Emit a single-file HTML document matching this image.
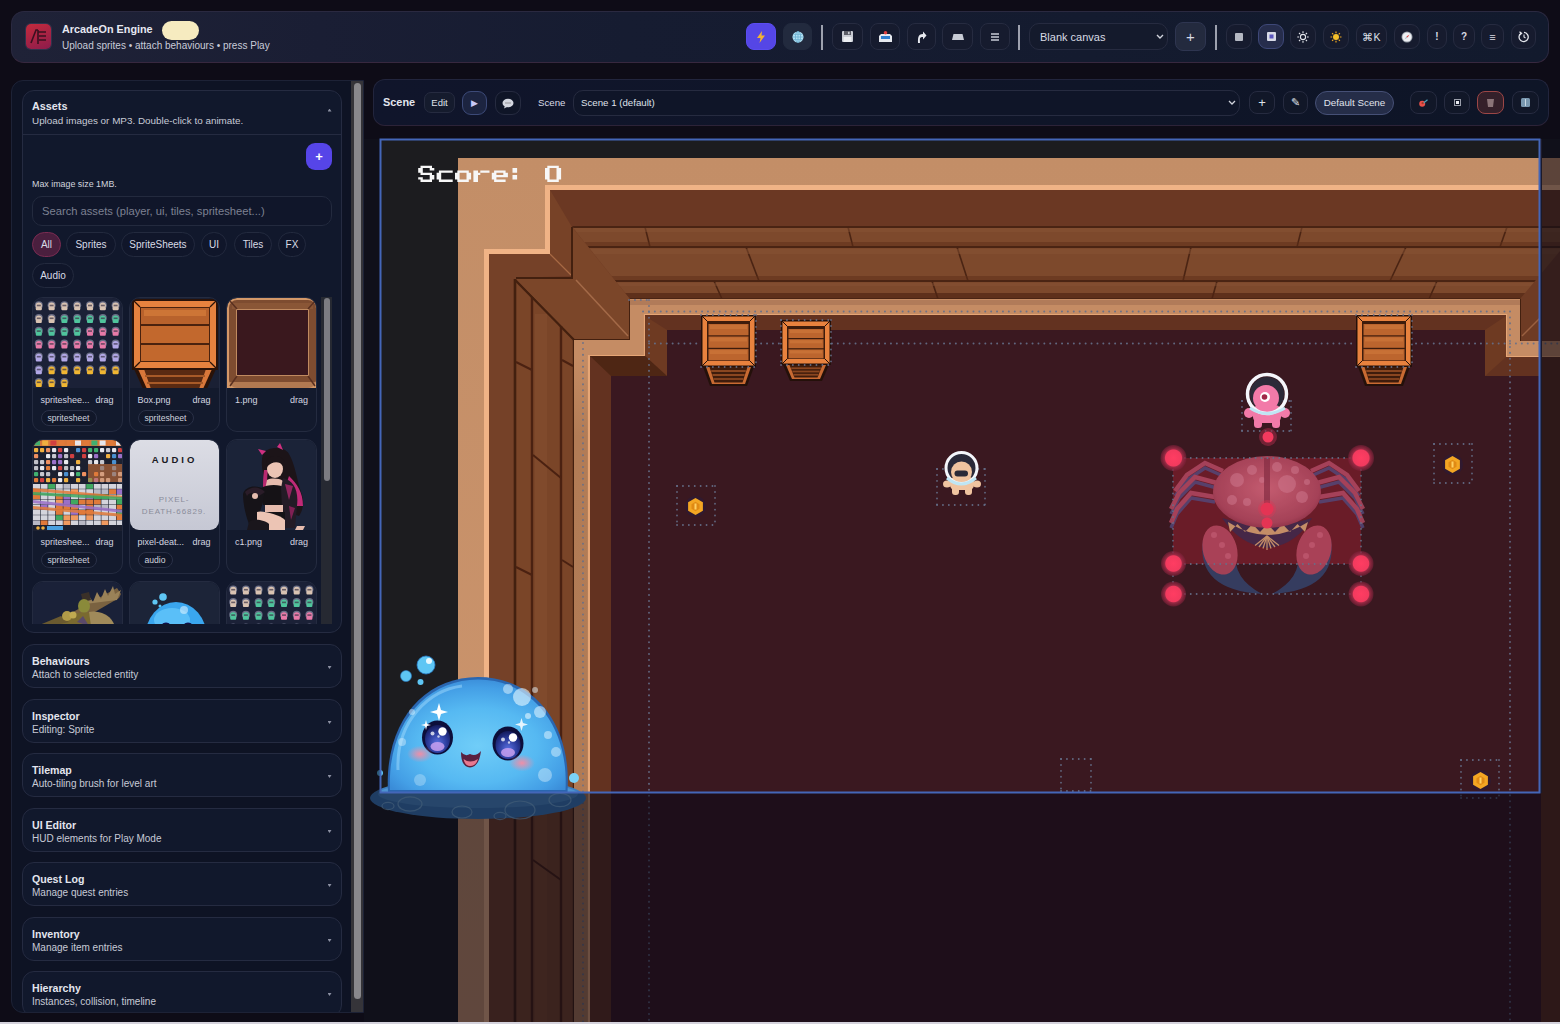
<!DOCTYPE html>
<html><head><meta charset="utf-8">
<style>
*{box-sizing:border-box;margin:0;padding:0}
html,body{width:1560px;height:1024px;overflow:hidden;background:#0e0c17;font-family:"Liberation Sans",sans-serif;color:#d8dbe6}
.abs{position:absolute}
#topbar{position:absolute;left:11px;top:11px;width:1538px;height:52px;border-radius:13px;background:linear-gradient(90deg,#1f2237 0%,#1a1e34 20%,#161c31 40%,#121a2d 100%);border:1px solid #2a2940;border-bottom-color:#37283f}
.logo{position:absolute;left:14px;top:12px;width:25px;height:25px;border-radius:5px;background:linear-gradient(160deg,#c42a3c,#8c1c4c);box-shadow:0 0 0 1px #30334c}
.title{position:absolute;left:50px;top:11px;font-size:10.8px;font-weight:700;color:#e6e8f2}
.badge{position:absolute;left:150px;top:10px;width:37px;height:19px;border-radius:10px;background:#f6ebc0}
.sub{position:absolute;left:50px;top:28px;font-size:10px;color:#c9ccd9}
.tb{position:absolute;top:11px;height:27px;border-radius:8px;border:1px solid #262b40;background:#161b2e;font-size:11px;color:#d8dae4;display:flex;align-items:center;justify-content:center}
.sep{position:absolute;top:13px;width:2px;height:25px;background:#8a8e9c}
#leftpanel{position:absolute;left:11px;top:80px;width:353px;height:933px;border-radius:12px 0 0 12px;background:#0e1324;border:1px solid #1d2236;overflow:hidden}
.card{position:absolute;left:10px;width:320px;border-radius:12px;border:1px solid #252b41;background:#11182c}
.ctitle{position:absolute;left:9px;font-size:10.6px;font-weight:700;color:#e3e5ee;white-space:nowrap}
.csub{position:absolute;left:9px;font-size:10px;color:#c7cad6;white-space:nowrap}
.cdot{position:absolute;left:304.5px;width:4px;height:3px;background:#8c90a2;clip-path:polygon(0 0,100% 0,50% 100%)}
.cup{clip-path:polygon(50% 0,100% 100%,0 100%)}
.chip{position:absolute;height:25px;border-radius:13px;border:1px solid #232a3e;background:#10162a;font-size:10px;color:#d8dbe6;display:flex;align-items:center;justify-content:center}
.asset{position:absolute;width:91px;border-radius:10px;border:1px solid #232a3e;background:#141a2e;overflow:hidden}
.aimg{position:absolute;left:0;top:0;width:91px;height:90px;background:#1a2034}
.alab{position:absolute;left:8px;top:97px;font-size:9px;color:#d6d9e4;white-space:nowrap}
.adrag{position:absolute;right:8px;top:97px;font-size:9px;color:#d6d9e4}
.atag{position:absolute;left:8px;top:112px;height:16px;padding:0 7px;border-radius:8px;border:1px solid #2a3046;font-size:8.5px;color:#d0d3de;line-height:14px;background:#121829}
#scenebar{position:absolute;left:373px;top:79px;width:1176px;height:47px;border-radius:12px;background:linear-gradient(90deg,#10152b,#0f1528 60%,#0e1527);border:1px solid #22253d;border-bottom-color:#2c2338}
.sb{position:absolute;top:11px;height:23px;border-radius:8px;border:1px solid #262b40;background:#111728;font-size:10px;color:#dfe1ea;display:flex;align-items:center;justify-content:center}
</style></head><body>

<div id="topbar">
  <div class="logo"><svg width="25" height="25" viewBox="0 0 25 25"><path d="M5 19 L10 6 L12 6 M12 8 L20 8 M13 12 L20 12 M13 16 L20 16 M12 6 L12 20" stroke="#3a1020" stroke-width="1.6" fill="none"/></svg></div>
  <div class="title">ArcadeOn Engine</div>
  <div class="badge" style="top:9px"></div>
  <div class="sub">Upload sprites • attach behaviours • press Play</div>

  <div class="tb" style="left:734px;width:30px;background:#5546e6;border-color:#5a4cf0"><svg width="10" height="12" viewBox="0 0 10 12"><path d="M6 0 L1 7 L4.5 7 L3.5 12 L9 4.5 L5.5 4.5 Z" fill="#f2b233"/></svg></div>
  <div class="tb" style="left:771px;width:29px;background:#222a3e;border-color:#222a3e"><svg width="12" height="12" viewBox="0 0 12 12"><circle cx="6" cy="6" r="5.5" fill="#b4e2f4"/><path d="M0.5 6 H11.5 M6 0.5 V11.5 M1.5 3.3 H10.5 M1.5 8.7 H10.5" stroke="#6aaed0" stroke-width="0.8"/><ellipse cx="6" cy="6" rx="2.6" ry="5.5" fill="none" stroke="#6aaed0" stroke-width="0.8"/></svg></div>
  <div class="sep" style="left:809px;width:1.6px;background:#9da1ae"></div>
  <div class="tb" style="left:820px;width:31px"><svg width="11" height="11" viewBox="0 0 11 11"><rect x="0" y="0" width="11" height="11" rx="1" fill="#c9ccd4"/><rect x="2" y="0" width="7" height="4" fill="#5a5c66"/><rect x="6" y="0.8" width="1.6" height="2.4" fill="#c9ccd4"/><rect x="1.5" y="6" width="8" height="5" fill="#eceef2"/></svg></div>
  <div class="tb" style="left:858px;width:30px"><svg width="13" height="11" viewBox="0 0 13 11"><path d="M0 5 L2 3 L11 3 L13 5 L13 11 L0 11 Z" fill="#e6e9ef"/><rect x="2" y="5" width="9" height="3" fill="#2f7fd0"/><circle cx="6.5" cy="1.8" r="1.8" fill="#e04040"/></svg></div>
  <div class="tb" style="left:895px;width:29px"><svg width="10" height="12" viewBox="0 0 10 12"><path d="M3 12 C3 8 2 6 6 6 L6 8.5 L9.5 4.5 L6 0.5 L6 3 C0.5 3 1 8 1 12 Z" fill="#e8eaf0" transform="translate(0,0)"/></svg></div>
  <div class="tb" style="left:930px;width:31px"><svg width="12" height="6" viewBox="0 0 12 6"><path d="M1.5 0 H10.5 L12 6 H0 Z" fill="#c8ccd6"/></svg></div>
  <div class="tb" style="left:968px;width:30px"><svg width="8" height="8" viewBox="0 0 8 8"><path d="M0 1 H8 M0 4 H8 M0 7 H8" stroke="#c8ccd6" stroke-width="1.3"/></svg></div>
  <div class="sep" style="left:1006px;width:1.6px;background:#9da1ae"></div>
  <div class="tb" style="left:1017px;width:139px;border-radius:10px;justify-content:flex-start;padding-left:10px;background:#141a2c">Blank canvas<svg style="position:absolute;right:3px;top:10px" width="8" height="6" viewBox="0 0 8 6"><path d="M1 1 L4 4 L7 1" stroke="#d0d3dc" stroke-width="1.4" fill="none"/></svg></div>
  <div class="tb" style="left:1163px;width:31px;top:10px;height:29px;background:#232a3e;border-color:#2e3550;font-size:15px">+</div>
  <div class="sep" style="left:1203px;width:1.6px;background:#9da1ae"></div>
  <div class="tb" style="left:1214px;width:26px;top:12px;height:25px;border-radius:9px"><div style="width:8px;height:8px;background:#b4b8c2;border-radius:1px"></div></div>
  <div class="tb" style="left:1246px;width:26px;top:12px;height:25px;border-radius:9px;background:#262d4c;border-color:#3e4878"><svg width="9" height="9" viewBox="0 0 9 9"><rect width="9" height="9" rx="1" fill="#d8dbe8"/><rect x="2.5" y="2.5" width="4" height="4" fill="#5a56c0"/></svg></div>
  <div class="tb" style="left:1278px;width:26px;top:12px;height:25px;border-radius:9px"><svg width="12" height="12" viewBox="0 0 12 12"><circle cx="6" cy="6" r="2.6" fill="none" stroke="#e4e6ec" stroke-width="1.1"/><path d="M6 0.3V2 M6 10V11.7 M0.3 6H2 M10 6H11.7 M2 2L3.2 3.2 M8.8 8.8L10 10 M2 10L3.2 8.8 M8.8 3.2L10 2" stroke="#e4e6ec" stroke-width="1.1"/></svg></div>
  <div class="tb" style="left:1311px;width:26px;top:12px;height:25px;border-radius:9px"><svg width="12" height="12" viewBox="0 0 12 12"><circle cx="6" cy="6" r="3" fill="#f5c02a"/><path d="M6 0.5V2.2 M6 9.8V11.5 M0.5 6H2.2 M9.8 6H11.5 M2.1 2.1L3.3 3.3 M8.7 8.7L9.9 9.9 M2.1 9.9L3.3 8.7 M8.7 3.3L9.9 2.1" stroke="#f0a820" stroke-width="1.2"/></svg></div>
  <div class="tb" style="left:1344px;width:31px;top:12px;height:25px;border-radius:9px;font-size:10.5px;color:#dfe1e8">⌘K</div>
  <div class="tb" style="left:1382px;width:26px;top:12px;height:25px;border-radius:9px"><svg width="12" height="12" viewBox="0 0 12 12"><circle cx="6" cy="6" r="5.5" fill="#9aa0aa"/><circle cx="6" cy="6" r="4.6" fill="#eef0f4"/><path d="M8.5 3.5 L6.6 6.6 L5.4 5.4 Z" fill="#e04848"/><path d="M3.5 8.5 L5.4 5.4 L6.6 6.6 Z" fill="#b0b4be"/></svg></div>
  <div class="tb" style="left:1415px;width:20px;top:12px;height:25px;border-radius:9px;font-size:10px;font-weight:700">!</div>
  <div class="tb" style="left:1441px;width:22px;top:12px;height:25px;border-radius:9px;font-size:10px;font-weight:700">?</div>
  <div class="tb" style="left:1469px;width:23px;top:12px;height:25px;border-radius:9px;font-size:11px">≡</div>
  <div class="tb" style="left:1499px;width:25px;top:12px;height:25px;border-radius:9px"><svg width="12" height="12" viewBox="0 0 12 12"><path d="M3 2.2 A4.6 4.6 0 1 0 6 1.4" fill="none" stroke="#e4e6ec" stroke-width="1.3"/><path d="M1.5 0.8 L3.6 2.4 L1.8 4" fill="none" stroke="#e4e6ec" stroke-width="1.2"/><path d="M6 3.5 V6 L7.5 7" fill="none" stroke="#e4e6ec" stroke-width="1.1"/></svg></div>
</div>

<div id="leftpanel">
  <div class="card" style="top:9px;height:543px">
    <div class="ctitle" style="top:9px;font-size:10.8px">Assets</div>
    <div class="csub" style="top:23.5px;font-size:9.9px">Upload images or MP3. Double-click to animate.</div>
    <div class="cdot cup" style="top:17.5px"></div>
    <div style="position:absolute;left:0;top:43px;width:319px;height:1px;background:#252b41"></div>
    <div style="position:absolute;left:283px;top:52px;width:26px;height:27px;border-radius:9px;background:#5645e8;color:#fff;font-size:13px;font-weight:700;display:flex;align-items:center;justify-content:center">+</div>
    <div class="csub" style="top:87.5px;font-size:8.9px;color:#d0d3de">Max image size 1MB.</div>
    <div style="position:absolute;left:9px;top:105px;width:300px;height:30px;border-radius:10px;border:1px solid #232a3e;background:#10162a;font-size:11.2px;color:#7d8192;padding-left:9px;line-height:28px;white-space:nowrap">Search assets (player, ui, tiles, spritesheet...)</div>
    <div class="chip" style="left:9px;top:141px;width:29px;background:#4a1f3e;border-color:#7a2c52">All</div>
    <div class="chip" style="left:43px;top:141px;width:50px">Sprites</div>
    <div class="chip" style="left:98px;top:141px;width:74px">SpriteSheets</div>
    <div class="chip" style="left:178px;top:141px;width:26px">UI</div>
    <div class="chip" style="left:211px;top:141px;width:38px">Tiles</div>
    <div class="chip" style="left:255px;top:141px;width:28px">FX</div>
    <div class="chip" style="left:9px;top:172px;width:42px">Audio</div>
    <div id="grid" style="position:absolute;left:0;top:196px;width:319px;height:337px;overflow:hidden">
    </div>
  </div>
  <div class="card" style="top:563px;height:44px"><div class="ctitle" style="top:10px">Behaviours</div><div class="csub" style="top:24px">Attach to selected entity</div><div class="cdot" style="top:21px"></div></div>
  <div class="card" style="top:618px;height:44px"><div class="ctitle" style="top:10px">Inspector</div><div class="csub" style="top:24px">Editing: Sprite</div><div class="cdot" style="top:21px"></div></div>
  <div class="card" style="top:672px;height:44px"><div class="ctitle" style="top:10px">Tilemap</div><div class="csub" style="top:24px">Auto-tiling brush for level art</div><div class="cdot" style="top:21px"></div></div>
  <div class="card" style="top:727px;height:44px"><div class="ctitle" style="top:10px">UI Editor</div><div class="csub" style="top:24px">HUD elements for Play Mode</div><div class="cdot" style="top:21px"></div></div>
  <div class="card" style="top:781px;height:44px"><div class="ctitle" style="top:10px">Quest Log</div><div class="csub" style="top:24px">Manage quest entries</div><div class="cdot" style="top:21px"></div></div>
  <div class="card" style="top:836px;height:44px"><div class="ctitle" style="top:10px">Inventory</div><div class="csub" style="top:24px">Manage item entries</div><div class="cdot" style="top:21px"></div></div>
  <div class="card" style="top:890px;height:46px"><div class="ctitle" style="top:10px">Hierarchy</div><div class="csub" style="top:24px">Instances, collision, timeline</div><div class="cdot" style="top:21px"></div></div>
  <div style="position:absolute;left:339px;top:0;width:13px;height:933px;background:#353439"></div>
  <div style="position:absolute;left:342px;top:2px;width:7px;height:916px;border-radius:4px;background:#89888c"></div>
</div>

<div id="scenebar">
  <div style="position:absolute;left:9px;top:16px;font-size:10.9px;font-weight:700;color:#e3e5ee">Scene</div>
  <div class="sb" style="left:50px;top:12px;width:31px;height:21px;border-radius:7px;font-size:9.5px;background:#151b2d">Edit</div>
  <div class="sb" style="left:88px;width:25px;height:24px;border-radius:9px;background:#1c2440;border-color:#3c4a78;font-size:8.5px;color:#c8c9f8">▶</div>
  <div class="sb" style="left:121px;width:26px;height:24px;border-radius:9px;background:#0f1527"><svg width="12" height="11" viewBox="0 0 12 11"><ellipse cx="6" cy="5" rx="5.5" ry="4.3" fill="#d4d7e0"/><path d="M3 7.5 L2 10.5 L6 8.5 Z" fill="#d4d7e0"/><circle cx="4" cy="5" r="0.8" fill="#888"/><circle cx="6" cy="5" r="0.8" fill="#888"/><circle cx="8" cy="5" r="0.8" fill="#888"/></svg></div>
  <div style="position:absolute;left:164px;top:17px;font-size:9.7px;color:#d8dbe6">Scene</div>
  <div class="sb" style="left:199px;top:10px;width:667px;height:26px;border-radius:10px;justify-content:flex-start;padding-left:7px;padding-bottom:1px;font-size:9.7px;background:#0f1528">Scene 1 (default)<svg style="position:absolute;right:3px;top:9px" width="8" height="6" viewBox="0 0 8 6"><path d="M1 1 L4 4 L7 1" stroke="#d0d3dc" stroke-width="1.3" fill="none"/></svg></div>
  <div class="sb" style="left:875px;width:26px;font-size:13px">+</div>
  <div class="sb" style="left:909px;width:25px;font-size:11px">✎</div>
  <div class="sb" style="left:941px;top:11px;width:79px;height:24px;border-radius:12px;background:#252d48;border-color:#465076;font-size:9.8px;color:#e0e3ec;padding-bottom:2px">Default Scene</div>
  <div class="sb" style="left:1036px;width:27px"><svg width="10" height="8" viewBox="0 0 10 8"><circle cx="3.2" cy="4.8" r="3" fill="#e8504a"/><path d="M4.5 4 L8.5 0.8" stroke="#4aa0b8" stroke-width="1.3"/><circle cx="3.6" cy="4.2" r="1.1" fill="#a83828"/></svg></div>
  <div class="sb" style="left:1070px;width:26px"><svg width="7" height="7" viewBox="0 0 7 7"><rect x="0.5" y="0.5" width="6" height="6" fill="none" stroke="#9a9eaa" stroke-width="1"/><rect x="2" y="2" width="3" height="3" fill="#e8eaf0"/></svg></div>
  <div class="sb" style="left:1103px;width:27px;background:#34202a;border-color:#9c4646"><svg width="7" height="8" viewBox="0 0 7 8"><path d="M0 0 H7 L6 8 H1 Z" fill="#8a7478"/></svg></div>
  <div class="sb" style="left:1138px;width:27px"><svg width="9" height="9" viewBox="0 0 9 9"><rect width="9" height="9" rx="1.5" fill="#7a98b0"/><rect x="4" y="1" width="1" height="7" fill="#c8d8e4"/></svg></div>
</div>

<div id="world" style="position:absolute;left:0;top:0;width:1560px;height:1024px;overflow:hidden;pointer-events:none"><svg style="position:absolute;left:0;top:0" width="1560" height="1024" viewBox="0 0 1560 1024">
<defs><linearGradient id="tanG" x1="0" y1="0" x2="0" y2="1"><stop offset="0" stop-color="#c38e67"/><stop offset="1" stop-color="#cd956d"/></linearGradient><radialGradient id="slimeG" cx="0.5" cy="0.6" r="0.62"><stop offset="0" stop-color="#70cdf8"/><stop offset="0.55" stop-color="#56b9f2"/><stop offset="0.85" stop-color="#449fe6"/><stop offset="1" stop-color="#3a8cd8"/></radialGradient><radialGradient id="eyeG" cx="0.5" cy="0.65" r="0.65"><stop offset="0" stop-color="#5a70e0"/><stop offset="0.6" stop-color="#2a3a9a"/><stop offset="1" stop-color="#141a5a"/></radialGradient><radialGradient id="cheekG"><stop offset="0" stop-color="#ff8aa0" stop-opacity="0.9"/><stop offset="1" stop-color="#ff8aa0" stop-opacity="0"/></radialGradient><radialGradient id="domeG" cx="0.5" cy="0.45" r="0.6"><stop offset="0" stop-color="#d86a80"/><stop offset="0.8" stop-color="#b24a62"/><stop offset="1" stop-color="#8a3048"/></radialGradient><radialGradient id="handleG"><stop offset="0" stop-color="#ff3d62"/><stop offset="0.62" stop-color="#f23a5e"/><stop offset="0.7" stop-color="#9a2a44"/><stop offset="1" stop-color="#7a2038" stop-opacity="0.6"/></radialGradient><linearGradient id="ledgeG" x1="0" y1="0" x2="0" y2="1"><stop offset="0" stop-color="#c58c64"/><stop offset="0.12" stop-color="#b27c56"/><stop offset="1" stop-color="#b07a54"/></linearGradient></defs>
<g>
<rect x="364" y="139" width="1196" height="885" fill="#1c1c1f"/>
<rect x="458" y="158" width="1102" height="866" fill="url(#tanG)"/>
<polygon points="545,185 1560,185 1560,1024 484,1024 484,249 545,249" fill="#f0b386"/>
<polygon points="550,190 1560,190 1560,1024 489,1024 489,254 550,254" fill="#6b3823"/>
<polygon points="550,190 572,227 572,276 550,254" fill="#774227"/>
<polygon points="550,254 572,276 515,278 489,278 489,254" fill="#754128"/>
<line x1="550" y1="254" x2="571" y2="275" stroke="#a86a44" stroke-width="1.2"/>
<polygon points="572,227 1590,227 1530,299 630,299" fill="#7d492c"/>
<clipPath id="plk"><polygon points="572,226 1590,226 1530,300 630,300"/></clipPath>
<g clip-path="url(#plk)">
<line x1="560" y1="227" x2="1560" y2="227" stroke="#4a2413" stroke-width="2"/>
<line x1="560" y1="247" x2="1560" y2="247" stroke="#4a2413" stroke-width="2"/>
<line x1="560" y1="281" x2="1560" y2="281" stroke="#4a2413" stroke-width="2"/>
<line x1="560" y1="299" x2="1560" y2="299" stroke="#4a2413" stroke-width="2"/>
<line x1="645" y1="227" x2="650" y2="247" stroke="#4a2413" stroke-width="1.6"/>
<line x1="848" y1="227" x2="853" y2="247" stroke="#4a2413" stroke-width="1.6"/>
<line x1="1302" y1="227" x2="1297" y2="247" stroke="#4a2413" stroke-width="1.6"/>
<line x1="1507" y1="227" x2="1500" y2="247" stroke="#4a2413" stroke-width="1.6"/>
<line x1="746" y1="247" x2="759" y2="281" stroke="#4a2413" stroke-width="1.6"/>
<line x1="957" y1="247" x2="968" y2="281" stroke="#4a2413" stroke-width="1.6"/>
<line x1="1191" y1="247" x2="1183" y2="281" stroke="#4a2413" stroke-width="1.6"/>
<line x1="1406" y1="247" x2="1390" y2="281" stroke="#4a2413" stroke-width="1.6"/>
<line x1="714" y1="281" x2="722" y2="299" stroke="#4a2413" stroke-width="1.6"/>
<line x1="932" y1="281" x2="938" y2="299" stroke="#4a2413" stroke-width="1.6"/>
<line x1="1217" y1="281" x2="1212" y2="299" stroke="#4a2413" stroke-width="1.6"/>
<line x1="1437" y1="281" x2="1429" y2="299" stroke="#4a2413" stroke-width="1.6"/>
<rect x="560" y="228" width="1000" height="4" fill="#8a5536" opacity="0.45"/>
<rect x="560" y="249" width="1000" height="5" fill="#8a5536" opacity="0.45"/>
<rect x="560" y="283" width="1000" height="3" fill="#8a5536" opacity="0.4"/>
<rect x="560" y="242" width="1000" height="4" fill="#5e2e18" opacity="0.5"/>
<rect x="560" y="276" width="1000" height="4" fill="#5e2e18" opacity="0.5"/>
<rect x="560" y="293" width="1000" height="5" fill="#4e2412" opacity="0.65"/>
</g>
<polygon points="515,278 572,278 572,227 630,299 630,340 574,340" fill="#7b4629"/>
<line x1="576" y1="280" x2="628" y2="336" stroke="#a46a48" stroke-width="1.5"/>
<polyline points="515,1024 515,278 572,278 572,227" fill="none" stroke="#43200f" stroke-width="2"/>
<line x1="515" y1="280" x2="574" y2="340" stroke="#43200f" stroke-width="1.8"/>
<line x1="630" y1="299" x2="630" y2="341" stroke="#43200f" stroke-width="2"/>
<line x1="574" y1="340" x2="630" y2="340" stroke="#43200f" stroke-width="2"/>
<rect x="489" y="277" width="27" height="747" fill="#754128"/>
<polygon points="515,280 574,340 574,1024 515,1024" fill="#7a4528"/>
<rect x="535" y="314" width="12" height="710" fill="#85502f" opacity="0.5"/>
<line x1="532" y1="297" x2="532" y2="1024" stroke="#4a2111" stroke-width="2.4"/>
<line x1="561" y1="326" x2="561" y2="1024" stroke="#4a2111" stroke-width="2.4"/>
<line x1="515" y1="279" x2="515" y2="1024" stroke="#43200f" stroke-width="2.6"/>
<line x1="515" y1="280" x2="574" y2="340" stroke="#43200f" stroke-width="2"/>
<line x1="574" y1="340" x2="574" y2="1024" stroke="#43200f" stroke-width="2.4"/>
<line x1="516" y1="362" x2="532" y2="370" stroke="#4a2111" stroke-width="2"/>
<line x1="516" y1="567" x2="532" y2="575" stroke="#4a2111" stroke-width="2"/>
<line x1="533" y1="455" x2="561" y2="478" stroke="#4a2111" stroke-width="2"/>
<line x1="562" y1="360" x2="573" y2="366" stroke="#4a2111" stroke-width="2"/>
<line x1="562" y1="560" x2="573" y2="567" stroke="#4a2111" stroke-width="2"/>
<line x1="533" y1="860" x2="561" y2="880" stroke="#4a2111" stroke-width="2"/>
<line x1="516" y1="790" x2="532" y2="798" stroke="#4a2111" stroke-width="2"/>
<polygon points="1520,299 1580,227 1560,340 1520,341" fill="#6e3b24"/>
<line x1="1522" y1="336" x2="1540" y2="318" stroke="#9a6040" stroke-width="1.5"/>
<line x1="1520" y1="299" x2="1520" y2="341" stroke="#43200f" stroke-width="2"/>
<polygon points="630,299 1520,299 1520,341 1560,341 1560,357 1506,357 1506,315 645,315 645,356 590,356 590,1024 574,1024 574,340 630,340" fill="#c58c64"/>
<rect x="574" y="356" width="16" height="668" fill="url(#ledgeG)"/>
<rect x="630" y="300" width="890" height="5" fill="#a87454" opacity="0.7"/>
<polyline points="589,1024 589,356 645,356 645,315 1506,315 1506,357 1560,357" fill="none" stroke="#e6a676" stroke-width="2.2"/>
<polygon points="645,315 1506,315 1506,357 1560,357 1560,376 1485,376 1485,330 667,330 667,376 611,376 611,1024 590,1024 590,356 645,356" fill="#633220"/>
<polygon points="645,316 667,330 667,376 645,356" fill="#6e3a22"/>
<polygon points="590,356 645,356 667,376 611,376" fill="#4e2614"/>
<polygon points="1485,330 1506,316 1506,357 1485,376" fill="#6e3a22"/>
<polygon points="667,330 1485,330 1485,376 1560,376 1560,1024 611,1024 611,376 667,376" fill="#3a1820"/>
<rect x="1541" y="357" width="19" height="667" fill="#5c2e1b"/>
</g>
<line x1="643" y1="311.5" x2="1510" y2="311.5" stroke="#66708a" stroke-width="1.9" stroke-linecap="round" stroke-dasharray="0.1 5.8" opacity="0.9"/>
<line x1="649" y1="300" x2="649" y2="1024" stroke="#66708a" stroke-width="1.9" stroke-linecap="round" stroke-dasharray="0.1 5.8" opacity="0.9"/>
<line x1="583" y1="343" x2="583" y2="1024" stroke="#66708a" stroke-width="1.9" stroke-linecap="round" stroke-dasharray="0.1 5.8" opacity="0.9"/>
<line x1="649" y1="343.5" x2="1510" y2="343.5" stroke="#66708a" stroke-width="1.9" stroke-linecap="round" stroke-dasharray="0.1 5.8" opacity="0.9"/>
<line x1="1510" y1="311.5" x2="1510" y2="1024" stroke="#66708a" stroke-width="1.9" stroke-linecap="round" stroke-dasharray="0.1 5.8" opacity="0.9"/>
<line x1="1510" y1="343.5" x2="1560" y2="343.5" stroke="#66708a" stroke-width="1.9" stroke-linecap="round" stroke-dasharray="0.1 5.8" opacity="0.9"/>
<line x1="629" y1="300" x2="650" y2="300" stroke="#66708a" stroke-width="1.9" stroke-linecap="round" stroke-dasharray="0.1 5.8" opacity="0.9"/>
<g transform="translate(701,315)">
<polygon points="2,52 53,52 46,71 9,71" fill="#24100a"/>
<polygon points="5,52 50,52 44,69 11,69" fill="#c86a32"/>
<polygon points="8.5,52 46.5,52 41.5,67.5 13.5,67.5" fill="#3e1c0c"/>
<line x1="10.2" y1="56.0" x2="44.8" y2="56.0" stroke="#8a4620" stroke-width="1.8"/>
<line x1="11.4" y1="60.0" x2="43.6" y2="60.0" stroke="#8a4620" stroke-width="1.8"/>
<line x1="12.6" y1="64.0" x2="42.4" y2="64.0" stroke="#8a4620" stroke-width="1.8"/>
<rect x="0" y="0" width="55" height="52" fill="#24100a"/>
<rect x="1.5" y="1.5" width="52" height="49" fill="#e8823e"/>
<rect x="6" y="6" width="43" height="40" fill="#3e1c0c"/>
<rect x="7.5" y="9.0" width="40" height="11.3" fill="#bc652e"/>
<rect x="9" y="10.0" width="37" height="4.0" fill="#d07a3c" opacity="0.6"/>
<rect x="7.5" y="21.5" width="40" height="11.3" fill="#bc652e"/>
<rect x="9" y="22.5" width="37" height="4.0" fill="#d07a3c" opacity="0.6"/>
<rect x="7.5" y="34.1" width="40" height="11.3" fill="#bc652e"/>
<rect x="9" y="35.1" width="37" height="4.0" fill="#d07a3c" opacity="0.6"/>
<line x1="1" y1="1" x2="6" y2="6" stroke="#24100a" stroke-width="1"/><line x1="54" y1="1" x2="49" y2="6" stroke="#24100a" stroke-width="1"/><line x1="1" y1="51" x2="6" y2="46" stroke="#24100a" stroke-width="1"/><line x1="54" y1="51" x2="49" y2="46" stroke="#24100a" stroke-width="1"/>
</g>
<g transform="translate(781,320)">
<polygon points="2,45 48,45 41,61 9,61" fill="#24100a"/>
<polygon points="5,45 45,45 39,59 11,59" fill="#c86a32"/>
<polygon points="8.5,45 41.5,45 36.5,57.5 13.5,57.5" fill="#3e1c0c"/>
<line x1="10.2" y1="48.25" x2="39.8" y2="48.25" stroke="#8a4620" stroke-width="1.8"/>
<line x1="11.4" y1="51.5" x2="38.6" y2="51.5" stroke="#8a4620" stroke-width="1.8"/>
<line x1="12.6" y1="54.75" x2="37.4" y2="54.75" stroke="#8a4620" stroke-width="1.8"/>
<rect x="0" y="0" width="50" height="45" fill="#24100a"/>
<rect x="1.5" y="1.5" width="47" height="42" fill="#e8823e"/>
<rect x="6" y="6" width="38" height="33" fill="#3e1c0c"/>
<rect x="7.5" y="9.0" width="35" height="9.0" fill="#bc652e"/>
<rect x="9" y="10.0" width="32" height="3.1" fill="#d07a3c" opacity="0.6"/>
<rect x="7.5" y="19.2" width="35" height="9.0" fill="#bc652e"/>
<rect x="9" y="20.2" width="32" height="3.1" fill="#d07a3c" opacity="0.6"/>
<rect x="7.5" y="29.4" width="35" height="9.0" fill="#bc652e"/>
<rect x="9" y="30.4" width="32" height="3.1" fill="#d07a3c" opacity="0.6"/>
<line x1="1" y1="1" x2="6" y2="6" stroke="#24100a" stroke-width="1"/><line x1="49" y1="1" x2="44" y2="6" stroke="#24100a" stroke-width="1"/><line x1="1" y1="44" x2="6" y2="39" stroke="#24100a" stroke-width="1"/><line x1="49" y1="44" x2="44" y2="39" stroke="#24100a" stroke-width="1"/>
</g>
<g transform="translate(1356,315)">
<polygon points="2,52 54,52 47,71 9,71" fill="#24100a"/>
<polygon points="5,52 51,52 45,69 11,69" fill="#c86a32"/>
<polygon points="8.5,52 47.5,52 42.5,67.5 13.5,67.5" fill="#3e1c0c"/>
<line x1="10.2" y1="56.0" x2="45.8" y2="56.0" stroke="#8a4620" stroke-width="1.8"/>
<line x1="11.4" y1="60.0" x2="44.6" y2="60.0" stroke="#8a4620" stroke-width="1.8"/>
<line x1="12.6" y1="64.0" x2="43.4" y2="64.0" stroke="#8a4620" stroke-width="1.8"/>
<rect x="0" y="0" width="56" height="52" fill="#24100a"/>
<rect x="1.5" y="1.5" width="53" height="49" fill="#e8823e"/>
<rect x="6" y="6" width="44" height="40" fill="#3e1c0c"/>
<rect x="7.5" y="9.0" width="41" height="11.3" fill="#bc652e"/>
<rect x="9" y="10.0" width="38" height="4.0" fill="#d07a3c" opacity="0.6"/>
<rect x="7.5" y="21.5" width="41" height="11.3" fill="#bc652e"/>
<rect x="9" y="22.5" width="38" height="4.0" fill="#d07a3c" opacity="0.6"/>
<rect x="7.5" y="34.1" width="41" height="11.3" fill="#bc652e"/>
<rect x="9" y="35.1" width="38" height="4.0" fill="#d07a3c" opacity="0.6"/>
<line x1="1" y1="1" x2="6" y2="6" stroke="#24100a" stroke-width="1"/><line x1="55" y1="1" x2="50" y2="6" stroke="#24100a" stroke-width="1"/><line x1="1" y1="51" x2="6" y2="46" stroke="#24100a" stroke-width="1"/><line x1="55" y1="51" x2="50" y2="46" stroke="#24100a" stroke-width="1"/>
</g>
<line x1="701" y1="315" x2="756" y2="315" stroke="#66708a" stroke-width="1.8" stroke-linecap="round" stroke-dasharray="0.1 5.8" opacity="0.9"/>
<line x1="756" y1="315" x2="756" y2="367" stroke="#66708a" stroke-width="1.8" stroke-linecap="round" stroke-dasharray="0.1 5.8" opacity="0.9"/>
<line x1="701" y1="367" x2="756" y2="367" stroke="#66708a" stroke-width="1.8" stroke-linecap="round" stroke-dasharray="0.1 5.8" opacity="0.9"/>
<line x1="781" y1="320" x2="831" y2="320" stroke="#66708a" stroke-width="1.8" stroke-linecap="round" stroke-dasharray="0.1 5.8" opacity="0.9"/>
<line x1="831" y1="320" x2="831" y2="365" stroke="#66708a" stroke-width="1.8" stroke-linecap="round" stroke-dasharray="0.1 5.8" opacity="0.9"/>
<line x1="781" y1="365" x2="831" y2="365" stroke="#66708a" stroke-width="1.8" stroke-linecap="round" stroke-dasharray="0.1 5.8" opacity="0.9"/>
<line x1="781" y1="320" x2="781" y2="365" stroke="#66708a" stroke-width="1.8" stroke-linecap="round" stroke-dasharray="0.1 5.8" opacity="0.9"/>
<line x1="1356" y1="315" x2="1412" y2="315" stroke="#66708a" stroke-width="1.8" stroke-linecap="round" stroke-dasharray="0.1 5.8" opacity="0.9"/>
<line x1="1412" y1="315" x2="1412" y2="367" stroke="#66708a" stroke-width="1.8" stroke-linecap="round" stroke-dasharray="0.1 5.8" opacity="0.9"/>
<line x1="1356" y1="367" x2="1412" y2="367" stroke="#66708a" stroke-width="1.8" stroke-linecap="round" stroke-dasharray="0.1 5.8" opacity="0.9"/>
<circle cx="695.5" cy="506.5" r="10.5" fill="#2a1a3a" opacity="0.6"/>
<polygon points="695.5,515.0 688.1,510.8 688.1,502.2 695.5,498.0 702.9,502.2 702.9,510.8" fill="#f3a623"/>
<polygon points="695.5,511.2 691.5,508.8 691.5,504.2 695.5,501.8 699.5,504.2 699.5,508.8" fill="#e08a14"/>
<rect x="694.5" y="503.5" width="2" height="6" fill="#ffcf60"/>
<line x1="677" y1="486" x2="715" y2="486" stroke="#66708a" stroke-width="1.8" stroke-linecap="round" stroke-dasharray="0.1 5.8" opacity="0.9"/>
<line x1="715" y1="486" x2="715" y2="525" stroke="#66708a" stroke-width="1.8" stroke-linecap="round" stroke-dasharray="0.1 5.8" opacity="0.9"/>
<line x1="677" y1="525" x2="715" y2="525" stroke="#66708a" stroke-width="1.8" stroke-linecap="round" stroke-dasharray="0.1 5.8" opacity="0.9"/>
<line x1="677" y1="486" x2="677" y2="525" stroke="#66708a" stroke-width="1.8" stroke-linecap="round" stroke-dasharray="0.1 5.8" opacity="0.9"/>
<circle cx="1452.5" cy="464.5" r="10.5" fill="#2a1a3a" opacity="0.6"/>
<polygon points="1452.5,473.0 1445.1,468.8 1445.1,460.2 1452.5,456.0 1459.9,460.2 1459.9,468.8" fill="#f3a623"/>
<polygon points="1452.5,469.2 1448.5,466.8 1448.5,462.2 1452.5,459.8 1456.5,462.2 1456.5,466.8" fill="#e08a14"/>
<rect x="1451.5" y="461.5" width="2" height="6" fill="#ffcf60"/>
<line x1="1434" y1="444" x2="1472" y2="444" stroke="#66708a" stroke-width="1.8" stroke-linecap="round" stroke-dasharray="0.1 5.8" opacity="0.9"/>
<line x1="1472" y1="444" x2="1472" y2="483" stroke="#66708a" stroke-width="1.8" stroke-linecap="round" stroke-dasharray="0.1 5.8" opacity="0.9"/>
<line x1="1434" y1="483" x2="1472" y2="483" stroke="#66708a" stroke-width="1.8" stroke-linecap="round" stroke-dasharray="0.1 5.8" opacity="0.9"/>
<line x1="1434" y1="444" x2="1434" y2="483" stroke="#66708a" stroke-width="1.8" stroke-linecap="round" stroke-dasharray="0.1 5.8" opacity="0.9"/>
<circle cx="1480.5" cy="780.5" r="10.5" fill="#2a1a3a" opacity="0.6"/>
<polygon points="1480.5,789.0 1473.1,784.8 1473.1,776.2 1480.5,772.0 1487.9,776.2 1487.9,784.8" fill="#f3a623"/>
<polygon points="1480.5,785.2 1476.5,782.8 1476.5,778.2 1480.5,775.8 1484.5,778.2 1484.5,782.8" fill="#e08a14"/>
<rect x="1479.5" y="777.5" width="2" height="6" fill="#ffcf60"/>
<line x1="1461" y1="760" x2="1499" y2="760" stroke="#66708a" stroke-width="1.8" stroke-linecap="round" stroke-dasharray="0.1 5.8" opacity="0.9"/>
<line x1="1499" y1="760" x2="1499" y2="798" stroke="#66708a" stroke-width="1.8" stroke-linecap="round" stroke-dasharray="0.1 5.8" opacity="0.9"/>
<line x1="1461" y1="798" x2="1499" y2="798" stroke="#66708a" stroke-width="1.8" stroke-linecap="round" stroke-dasharray="0.1 5.8" opacity="0.9"/>
<line x1="1461" y1="760" x2="1461" y2="798" stroke="#66708a" stroke-width="1.8" stroke-linecap="round" stroke-dasharray="0.1 5.8" opacity="0.9"/>
<line x1="1061" y1="759" x2="1091" y2="759" stroke="#66708a" stroke-width="1.8" stroke-linecap="round" stroke-dasharray="0.1 5.8" opacity="0.9"/>
<line x1="1091" y1="759" x2="1091" y2="791" stroke="#66708a" stroke-width="1.8" stroke-linecap="round" stroke-dasharray="0.1 5.8" opacity="0.9"/>
<line x1="1061" y1="791" x2="1091" y2="791" stroke="#66708a" stroke-width="1.8" stroke-linecap="round" stroke-dasharray="0.1 5.8" opacity="0.9"/>
<line x1="1061" y1="759" x2="1061" y2="791" stroke="#66708a" stroke-width="1.8" stroke-linecap="round" stroke-dasharray="0.1 5.8" opacity="0.9"/>
<line x1="937" y1="469" x2="985" y2="469" stroke="#66708a" stroke-width="1.8" stroke-linecap="round" stroke-dasharray="0.1 5.8" opacity="0.9"/>
<line x1="985" y1="469" x2="985" y2="505" stroke="#66708a" stroke-width="1.8" stroke-linecap="round" stroke-dasharray="0.1 5.8" opacity="0.9"/>
<line x1="937" y1="505" x2="985" y2="505" stroke="#66708a" stroke-width="1.8" stroke-linecap="round" stroke-dasharray="0.1 5.8" opacity="0.9"/>
<line x1="937" y1="469" x2="937" y2="505" stroke="#66708a" stroke-width="1.8" stroke-linecap="round" stroke-dasharray="0.1 5.8" opacity="0.9"/>
<g>
<circle cx="961.5" cy="468" r="16" fill="#2a2a3a"/>
<ellipse cx="947" cy="484" rx="4" ry="3.5" fill="#f0c4a0"/><ellipse cx="977" cy="484" rx="4" ry="3.5" fill="#f0c4a0"/>
<rect x="950" y="477" width="24" height="13" rx="5" fill="#f0c4a0"/>
<rect x="952" y="486" width="7" height="9" rx="3" fill="#f0c4a0"/><rect x="965" y="486" width="7" height="9" rx="3" fill="#f0c4a0"/>
<circle cx="961.5" cy="472" r="10.5" fill="#f0c4a0"/>
<rect x="954.5" y="470.5" width="13.5" height="6" rx="3" fill="#2a2a38"/>
<circle cx="961.5" cy="468" r="15.5" fill="none" stroke="#f4f6fb" stroke-width="3"/>
<path d="M947 478 Q961 490 976 478" stroke="#bfe6f4" stroke-width="3" fill="none"/>
</g>
<line x1="1242" y1="401" x2="1291" y2="401" stroke="#66708a" stroke-width="1.8" stroke-linecap="round" stroke-dasharray="0.1 5.8" opacity="0.9"/>
<line x1="1291" y1="401" x2="1291" y2="431" stroke="#66708a" stroke-width="1.8" stroke-linecap="round" stroke-dasharray="0.1 5.8" opacity="0.9"/>
<line x1="1242" y1="431" x2="1291" y2="431" stroke="#66708a" stroke-width="1.8" stroke-linecap="round" stroke-dasharray="0.1 5.8" opacity="0.9"/>
<line x1="1242" y1="401" x2="1242" y2="431" stroke="#66708a" stroke-width="1.8" stroke-linecap="round" stroke-dasharray="0.1 5.8" opacity="0.9"/>
<g>
<circle cx="1268" cy="437" r="9" fill="#9a2a44" opacity="0.6"/><circle cx="1268" cy="437" r="5.5" fill="#f23a5e"/>
<circle cx="1267" cy="394" r="17" fill="#2c2a38"/>
<ellipse cx="1249" cy="413" rx="5" ry="5" fill="#f27aa8"/><ellipse cx="1285" cy="413" rx="5" ry="5" fill="#f27aa8"/>
<rect x="1253" y="405" width="28" height="18" rx="6" fill="#f27aa8"/>
<rect x="1254" y="418" width="8" height="10" rx="3.5" fill="#f27aa8"/><rect x="1272" y="418" width="8" height="10" rx="3.5" fill="#f27aa8"/>
<circle cx="1266" cy="398" r="13" fill="#f27aa8"/>
<circle cx="1265" cy="397" r="5" fill="#fff"/><circle cx="1264.5" cy="397" r="2.8" fill="#a02848"/>
<circle cx="1267" cy="394" r="19.5" fill="none" stroke="#f4f6fb" stroke-width="3.5"/>
<path d="M1250 408 Q1267 419 1285 408" stroke="#bfe6f4" stroke-width="3" fill="none"/>
</g>
<rect x="1173" y="458" width="188" height="106" fill="#6a1c28"/>
<g opacity="0.82">
<path d="M1223 476 L1205 468 L1187 480 L1175 496" stroke="#54487a" stroke-width="3.5" fill="none" stroke-linejoin="miter"/>
<path d="M1223 471 L1205 463 L1187 475 L1175 491" stroke="#b24a64" stroke-width="4.5" fill="none" stroke-linejoin="miter"/>
<path d="M1217 488 L1195 482 L1179 498 L1171 514" stroke="#54487a" stroke-width="3.5" fill="none" stroke-linejoin="miter"/>
<path d="M1217 483 L1195 477 L1179 493 L1171 509" stroke="#b24a64" stroke-width="4.5" fill="none" stroke-linejoin="miter"/>
<path d="M1215 502 L1191 498 L1177 514 L1171 528" stroke="#54487a" stroke-width="3.5" fill="none" stroke-linejoin="miter"/>
<path d="M1215 497 L1191 493 L1177 509 L1171 523" stroke="#b24a64" stroke-width="4.5" fill="none" stroke-linejoin="miter"/>
<path d="M1311 476 L1329 468 L1347 480 L1359 496" stroke="#54487a" stroke-width="3.5" fill="none" stroke-linejoin="miter"/>
<path d="M1311 471 L1329 463 L1347 475 L1359 491" stroke="#b24a64" stroke-width="4.5" fill="none" stroke-linejoin="miter"/>
<path d="M1317 488 L1339 482 L1355 498 L1363 514" stroke="#54487a" stroke-width="3.5" fill="none" stroke-linejoin="miter"/>
<path d="M1317 483 L1339 477 L1355 493 L1363 509" stroke="#b24a64" stroke-width="4.5" fill="none" stroke-linejoin="miter"/>
<path d="M1319 502 L1343 498 L1357 514 L1363 528" stroke="#54487a" stroke-width="3.5" fill="none" stroke-linejoin="miter"/>
<path d="M1319 497 L1343 493 L1357 509 L1363 523" stroke="#b24a64" stroke-width="4.5" fill="none" stroke-linejoin="miter"/>
<path d="M1203 540 Q1196 590 1262 594 Q1232 578 1236 552 Z" fill="#34446e"/>
<path d="M1331 540 Q1338 590 1272 594 Q1302 578 1298 552 Z" fill="#34446e"/>
<path d="M1222 518 Q1240 545 1268 548 Q1296 545 1312 518 Q1268 532 1222 518 Z" fill="#3e2a4e"/>
<path d="M1228 522 L1230.0 532 L1237.5 524 L1245.0 532 L1252.5 524 L1260.0 532 L1267.5 524 L1275.0 532 L1282.5 524 L1290.0 532 L1297.5 524 L1305.0 532 L1308 522 Q1268 548 1228 522 Z" fill="#d8a676"/>
<ellipse cx="1220" cy="550" rx="17" ry="25" fill="#b84a62" transform="rotate(-15 1220 550)"/><ellipse cx="1314" cy="550" rx="17" ry="25" fill="#b84a62" transform="rotate(15 1314 550)"/>
<line x1="1267" y1="536" x2="1255" y2="545.5" stroke="#d8a676" stroke-width="1.3"/>
<line x1="1267" y1="536" x2="1259" y2="547.0" stroke="#d8a676" stroke-width="1.3"/>
<line x1="1267" y1="536" x2="1263" y2="548.5" stroke="#d8a676" stroke-width="1.3"/>
<line x1="1267" y1="536" x2="1267" y2="550.0" stroke="#d8a676" stroke-width="1.3"/>
<line x1="1267" y1="536" x2="1271" y2="548.5" stroke="#d8a676" stroke-width="1.3"/>
<line x1="1267" y1="536" x2="1275" y2="547.0" stroke="#d8a676" stroke-width="1.3"/>
<line x1="1267" y1="536" x2="1279" y2="545.5" stroke="#d8a676" stroke-width="1.3"/>
<circle cx="1214" cy="535" r="3" fill="#d87088" opacity="0.6"/>
<circle cx="1222" cy="545" r="3" fill="#d87088" opacity="0.6"/>
<circle cx="1228" cy="556" r="3" fill="#d87088" opacity="0.6"/>
<circle cx="1320" cy="535" r="3" fill="#d87088" opacity="0.6"/>
<circle cx="1312" cy="545" r="3" fill="#d87088" opacity="0.6"/>
<circle cx="1306" cy="556" r="3" fill="#d87088" opacity="0.6"/>
<ellipse cx="1267" cy="492" rx="54" ry="36" fill="url(#domeG)"/>
<circle cx="1237" cy="480" r="7" fill="#e890a8" opacity="0.5"/>
<circle cx="1252" cy="470" r="5" fill="#e890a8" opacity="0.5"/>
<circle cx="1287" cy="484" r="9" fill="#e890a8" opacity="0.5"/>
<circle cx="1302" cy="497" r="6" fill="#e890a8" opacity="0.5"/>
<circle cx="1232" cy="500" r="5" fill="#e890a8" opacity="0.5"/>
<circle cx="1277" cy="467" r="5" fill="#e890a8" opacity="0.5"/>
<circle cx="1247" cy="502" r="4" fill="#e890a8" opacity="0.5"/>
<circle cx="1295" cy="470" r="4" fill="#e890a8" opacity="0.5"/>
<circle cx="1262" cy="480" r="3" fill="#e890a8" opacity="0.5"/>
<circle cx="1307" cy="482" r="3" fill="#e890a8" opacity="0.5"/>
<rect x="1264" y="458" width="6" height="52" fill="#8a3048" opacity="0.7"/>
<circle cx="1267" cy="509" r="9" fill="#ff3a5e" opacity="0.35"/><circle cx="1267" cy="509" r="6.5" fill="#ff3a5e"/><circle cx="1267" cy="523" r="5.5" fill="#ff3a5e"/>
</g>
<line x1="1173" y1="458" x2="1361" y2="458" stroke="#66708a" stroke-width="1.8" stroke-linecap="round" stroke-dasharray="0.1 5.8" opacity="0.9"/>
<line x1="1173" y1="458" x2="1173" y2="594" stroke="#66708a" stroke-width="1.8" stroke-linecap="round" stroke-dasharray="0.1 5.8" opacity="0.9"/>
<line x1="1361" y1="458" x2="1361" y2="594" stroke="#66708a" stroke-width="1.8" stroke-linecap="round" stroke-dasharray="0.1 5.8" opacity="0.9"/>
<line x1="1173" y1="564" x2="1361" y2="564" stroke="#66708a" stroke-width="1.8" stroke-linecap="round" stroke-dasharray="0.1 5.8" opacity="0.9"/>
<line x1="1173" y1="594" x2="1361" y2="594" stroke="#66708a" stroke-width="1.8" stroke-linecap="round" stroke-dasharray="0.1 5.8" opacity="0.9"/>
<circle cx="1173.5" cy="458" r="13" fill="url(#handleG)"/>
<circle cx="1361" cy="458" r="13" fill="url(#handleG)"/>
<circle cx="1173.5" cy="563.5" r="12.5" fill="url(#handleG)"/>
<circle cx="1361" cy="563.5" r="12.5" fill="url(#handleG)"/>
<circle cx="1173.5" cy="594" r="12.5" fill="url(#handleG)"/>
<circle cx="1361" cy="594" r="12.5" fill="url(#handleG)"/>
<g>
<ellipse cx="478" cy="798" rx="108" ry="21" fill="#3d7fc0"/>
<ellipse cx="478" cy="794" rx="100" ry="14" fill="#5298d6" opacity="0.8"/>
<ellipse cx="410" cy="804" rx="12" ry="7.199999999999999" fill="none" stroke="#8ac4ee" stroke-width="1.2" opacity="0.7"/>
<ellipse cx="462" cy="812" rx="10" ry="6.0" fill="none" stroke="#8ac4ee" stroke-width="1.2" opacity="0.7"/>
<ellipse cx="520" cy="810" rx="15" ry="9.0" fill="none" stroke="#8ac4ee" stroke-width="1.2" opacity="0.7"/>
<ellipse cx="560" cy="800" rx="11" ry="6.6" fill="none" stroke="#8ac4ee" stroke-width="1.2" opacity="0.7"/>
<ellipse cx="388" cy="806" rx="6" ry="3.5999999999999996" fill="none" stroke="#8ac4ee" stroke-width="1.2" opacity="0.7"/>
<ellipse cx="500" cy="816" rx="6" ry="3.5999999999999996" fill="none" stroke="#8ac4ee" stroke-width="1.2" opacity="0.7"/>
<path d="M388 792 C384 722 424 677 478 677 C532 677 572 722 567.5 792 Z" fill="#2a66b0"/>
<path d="M390 790 C387 724 426 679.5 478 679.5 C530 679.5 569 724 565.5 790 Z" fill="url(#slimeG)"/>
<path d="M398 770 C396 720 430 690 462 686" stroke="#a8e0ff" stroke-width="3" fill="none" opacity="0.45"/>
<circle cx="522" cy="697" r="9" fill="#e8f8ff" opacity="0.6"/>
<circle cx="508" cy="689" r="5" fill="#e8f8ff" opacity="0.5"/>
<circle cx="540" cy="712" r="6" fill="#e8f8ff" opacity="0.55"/>
<circle cx="548" cy="735" r="4" fill="#e8f8ff" opacity="0.5"/>
<circle cx="556" cy="752" r="5" fill="#e8f8ff" opacity="0.45"/>
<circle cx="402" cy="742" r="4" fill="#e8f8ff" opacity="0.4"/>
<circle cx="545" cy="775" r="7" fill="#e8f8ff" opacity="0.4"/>
<circle cx="528" cy="716" r="3" fill="#e8f8ff" opacity="0.6"/>
<circle cx="412" cy="712" r="3" fill="#e8f8ff" opacity="0.45"/>
<circle cx="420" cy="780" r="6" fill="#e8f8ff" opacity="0.3"/>
<circle cx="535" cy="690" r="3" fill="#e8f8ff" opacity="0.5"/>
<circle cx="426" cy="665" r="9" fill="#5ec6f4" stroke="#2a7cc8" stroke-width="0.8"/><circle cx="429" cy="661" r="3" fill="#e6f8ff"/>
<circle cx="406" cy="676" r="5.5" fill="#5ec6f4" stroke="#2a7cc8" stroke-width="0.6"/><circle cx="420.5" cy="682" r="3" fill="#5ec6f4"/>
<circle cx="574" cy="778" r="5" fill="#7ad2f8"/><circle cx="380" cy="773" r="3" fill="#5ec6f4"/>
<ellipse cx="437.5" cy="737.5" rx="15.5" ry="17" fill="#0c0e3a"/>
<ellipse cx="437.5" cy="739.0" rx="12.5" ry="14" fill="url(#eyeG)"/>
<ellipse cx="437.5" cy="746.5" rx="7" ry="4.5" fill="#c8a0f0" opacity="0.85"/>
<circle cx="442.5" cy="731.5" r="4.2" fill="#fff"/><circle cx="432.5" cy="733.5" r="2" fill="#fff" opacity="0.75"/><circle cx="438.5" cy="736.5" r="1.2" fill="#fff" opacity="0.7"/>
<ellipse cx="508" cy="743.5" rx="15.5" ry="17" fill="#0c0e3a"/>
<ellipse cx="508" cy="745.0" rx="12.5" ry="14" fill="url(#eyeG)"/>
<ellipse cx="508" cy="752.5" rx="7" ry="4.5" fill="#c8a0f0" opacity="0.85"/>
<circle cx="513" cy="737.5" r="4.2" fill="#fff"/><circle cx="503" cy="739.5" r="2" fill="#fff" opacity="0.75"/><circle cx="509" cy="742.5" r="1.2" fill="#fff" opacity="0.7"/>
<ellipse cx="420" cy="754" rx="13" ry="8.5" fill="url(#cheekG)"/><ellipse cx="522" cy="763" rx="13" ry="8.5" fill="url(#cheekG)"/>
<path d="M461 752 Q465 757 470 754 Q476 757 481 751 Q479 767 470 767.5 Q461 767 461 752 Z" fill="#5a2040"/>
<path d="M463.5 759 Q470 764 478 759 Q476 766 470 766 Q465 766 463.5 759 Z" fill="#e87890"/>
<path d="M437 710 l2 -7 l2 7 l7 2 l-7 2 l-2 7 l-2 -7 l-7 -2 z" fill="#fff"/>
<path d="M425 724 l1 -4 l1 4 l4 1 l-4 1 l-1 4 l-1 -4 l-4 -1 z" fill="#fff"/>
<path d="M520 723 l1.5 -5 l1.5 5 l5 1.5 l-5 1.5 l-1.5 5 l-1.5 -5 l-5 -1.5 z" fill="#fff" opacity="0.85"/>
</g>
<path fill="#f7f7f7" d="M420.50 165.80h11.50v2.30h-11.50zM418.20 168.10h4.60v2.30h-4.60zM429.70 168.10h4.60v2.30h-4.60zM418.20 170.40h4.60v2.30h-4.60zM420.50 172.70h11.50v2.30h-11.50zM429.70 175.00h4.60v2.30h-4.60zM418.20 177.30h4.60v2.30h-4.60zM429.70 177.30h4.60v2.30h-4.60zM420.50 179.60h11.50v2.30h-11.50zM438.90 170.40h13.80v2.30h-13.80zM436.60 172.70h4.60v2.30h-4.60zM436.60 175.00h4.60v2.30h-4.60zM436.60 177.30h4.60v2.30h-4.60zM438.90 179.60h13.80v2.30h-13.80zM457.30 170.40h11.50v2.30h-11.50zM455.00 172.70h4.60v2.30h-4.60zM466.50 172.70h4.60v2.30h-4.60zM455.00 175.00h4.60v2.30h-4.60zM466.50 175.00h4.60v2.30h-4.60zM455.00 177.30h4.60v2.30h-4.60zM466.50 177.30h4.60v2.30h-4.60zM457.30 179.60h11.50v2.30h-11.50zM473.40 170.40h4.60v2.30h-4.60zM480.30 170.40h9.20v2.30h-9.20zM473.40 172.70h6.90v2.30h-6.90zM473.40 175.00h4.60v2.30h-4.60zM473.40 177.30h4.60v2.30h-4.60zM473.40 179.60h4.60v2.30h-4.60zM494.10 170.40h11.50v2.30h-11.50zM491.80 172.70h4.60v2.30h-4.60zM503.30 172.70h4.60v2.30h-4.60zM491.80 175.00h16.10v2.30h-16.10zM491.80 177.30h4.60v2.30h-4.60zM494.10 179.60h11.50v2.30h-11.50zM512.50 168.10h4.60v2.30h-4.60zM512.50 170.40h4.60v2.30h-4.60zM512.50 175.00h4.60v2.30h-4.60zM512.50 177.30h4.60v2.30h-4.60zM547.30 165.80h11.50v2.30h-11.50zM545.00 168.10h4.60v2.30h-4.60zM556.50 168.10h4.60v2.30h-4.60zM545.00 170.40h4.60v2.30h-4.60zM556.50 170.40h4.60v2.30h-4.60zM545.00 172.70h4.60v2.30h-4.60zM556.50 172.70h4.60v2.30h-4.60zM545.00 175.00h4.60v2.30h-4.60zM556.50 175.00h4.60v2.30h-4.60zM545.00 177.30h4.60v2.30h-4.60zM556.50 177.30h4.60v2.30h-4.60zM547.30 179.60h11.50v2.30h-11.50z"/>
<rect x="364" y="793" width="1196" height="231" fill="#080716" opacity="0.55"/>
<rect x="364" y="139" width="16" height="654" fill="#080716" opacity="0.55"/>
<rect x="1540" y="139" width="20" height="654" fill="#080716" opacity="0.55"/>
<rect x="1540" y="139" width="2" height="654" fill="#1c1a2a"/>
<rect x="380.5" y="139.5" width="1159" height="653" fill="none" stroke="#4466b8" stroke-width="2"/>
<rect x="0" y="1022" width="1560" height="2" fill="#d4d2dc"/>
</svg></div>
<div style="position:absolute;left:23px;top:290px;width:318px;height:334px;overflow:hidden"><div style="position:absolute;left:8.5px;top:7px;width:91px;height:135px;border-radius:11px;border:1px solid #242b40;background:#131a2d;overflow:hidden"><div style="position:absolute;left:0;top:0;width:91px;height:90px;background:#1b2137"></div><svg width="91" height="90" style="position:absolute;left:0;top:0"><circle cx="5.8" cy="7.2" r="4" fill="#6a6e86"/><circle cx="5.8" cy="7.7" r="3.1" fill="#d9c3b2"/><rect x="2.8" y="9.2" width="6" height="3" rx="1" fill="#d9c3b2"/><rect x="3.8" y="6.7" width="4" height="1.6" fill="#3a3346" opacity="0.7"/><circle cx="18.6" cy="7.2" r="4" fill="#6a6e86"/><circle cx="18.6" cy="7.7" r="3.1" fill="#d9c3b2"/><rect x="15.6" y="9.2" width="6" height="3" rx="1" fill="#d9c3b2"/><rect x="16.6" y="6.7" width="4" height="1.6" fill="#3a3346" opacity="0.7"/><circle cx="31.4" cy="7.2" r="4" fill="#6a6e86"/><circle cx="31.4" cy="7.7" r="3.1" fill="#d9c3b2"/><rect x="28.4" y="9.2" width="6" height="3" rx="1" fill="#d9c3b2"/><rect x="29.4" y="6.7" width="4" height="1.6" fill="#3a3346" opacity="0.7"/><circle cx="44.2" cy="7.2" r="4" fill="#6a6e86"/><circle cx="44.2" cy="7.7" r="3.1" fill="#d9c3b2"/><rect x="41.2" y="9.2" width="6" height="3" rx="1" fill="#d9c3b2"/><rect x="42.2" y="6.7" width="4" height="1.6" fill="#3a3346" opacity="0.7"/><circle cx="57.0" cy="7.2" r="4" fill="#6a6e86"/><circle cx="57.0" cy="7.7" r="3.1" fill="#d9c3b2"/><rect x="54.0" y="9.2" width="6" height="3" rx="1" fill="#d9c3b2"/><rect x="55.0" y="6.7" width="4" height="1.6" fill="#3a3346" opacity="0.7"/><circle cx="69.8" cy="7.2" r="4" fill="#6a6e86"/><circle cx="69.8" cy="7.7" r="3.1" fill="#d9c3b2"/><rect x="66.8" y="9.2" width="6" height="3" rx="1" fill="#d9c3b2"/><rect x="67.8" y="6.7" width="4" height="1.6" fill="#3a3346" opacity="0.7"/><circle cx="82.6" cy="7.2" r="4" fill="#6a6e86"/><circle cx="82.6" cy="7.7" r="3.1" fill="#d9c3b2"/><rect x="79.6" y="9.2" width="6" height="3" rx="1" fill="#d9c3b2"/><rect x="80.6" y="6.7" width="4" height="1.6" fill="#3a3346" opacity="0.7"/><circle cx="5.8" cy="20.0" r="4" fill="#6a6e86"/><circle cx="5.8" cy="20.5" r="3.1" fill="#d9c3b2"/><rect x="2.8" y="22.0" width="6" height="3" rx="1" fill="#d9c3b2"/><rect x="3.8" y="19.5" width="4" height="1.6" fill="#3a3346" opacity="0.7"/><circle cx="18.6" cy="20.0" r="4" fill="#6a6e86"/><circle cx="18.6" cy="20.5" r="3.1" fill="#d9c3b2"/><rect x="15.6" y="22.0" width="6" height="3" rx="1" fill="#d9c3b2"/><rect x="16.6" y="19.5" width="4" height="1.6" fill="#3a3346" opacity="0.7"/><circle cx="31.4" cy="20.0" r="4" fill="#6a6e86"/><circle cx="31.4" cy="20.5" r="3.1" fill="#4fc49c"/><rect x="28.4" y="22.0" width="6" height="3" rx="1" fill="#4fc49c"/><rect x="29.4" y="19.5" width="4" height="1.6" fill="#3a3346" opacity="0.7"/><circle cx="44.2" cy="20.0" r="4" fill="#6a6e86"/><circle cx="44.2" cy="20.5" r="3.1" fill="#4fc49c"/><rect x="41.2" y="22.0" width="6" height="3" rx="1" fill="#4fc49c"/><rect x="42.2" y="19.5" width="4" height="1.6" fill="#3a3346" opacity="0.7"/><circle cx="57.0" cy="20.0" r="4" fill="#6a6e86"/><circle cx="57.0" cy="20.5" r="3.1" fill="#4fc49c"/><rect x="54.0" y="22.0" width="6" height="3" rx="1" fill="#4fc49c"/><rect x="55.0" y="19.5" width="4" height="1.6" fill="#3a3346" opacity="0.7"/><circle cx="69.8" cy="20.0" r="4" fill="#6a6e86"/><circle cx="69.8" cy="20.5" r="3.1" fill="#4fc49c"/><rect x="66.8" y="22.0" width="6" height="3" rx="1" fill="#4fc49c"/><rect x="67.8" y="19.5" width="4" height="1.6" fill="#3a3346" opacity="0.7"/><circle cx="82.6" cy="20.0" r="4" fill="#6a6e86"/><circle cx="82.6" cy="20.5" r="3.1" fill="#4fc49c"/><rect x="79.6" y="22.0" width="6" height="3" rx="1" fill="#4fc49c"/><rect x="80.6" y="19.5" width="4" height="1.6" fill="#3a3346" opacity="0.7"/><circle cx="5.8" cy="32.8" r="4" fill="#6a6e86"/><circle cx="5.8" cy="33.3" r="3.1" fill="#4fc49c"/><rect x="2.8" y="34.8" width="6" height="3" rx="1" fill="#4fc49c"/><rect x="3.8" y="32.3" width="4" height="1.6" fill="#3a3346" opacity="0.7"/><circle cx="18.6" cy="32.8" r="4" fill="#6a6e86"/><circle cx="18.6" cy="33.3" r="3.1" fill="#4fc49c"/><rect x="15.6" y="34.8" width="6" height="3" rx="1" fill="#4fc49c"/><rect x="16.6" y="32.3" width="4" height="1.6" fill="#3a3346" opacity="0.7"/><circle cx="31.4" cy="32.8" r="4" fill="#6a6e86"/><circle cx="31.4" cy="33.3" r="3.1" fill="#4fc49c"/><rect x="28.4" y="34.8" width="6" height="3" rx="1" fill="#4fc49c"/><rect x="29.4" y="32.3" width="4" height="1.6" fill="#3a3346" opacity="0.7"/><circle cx="44.2" cy="32.8" r="4" fill="#6a6e86"/><circle cx="44.2" cy="33.3" r="3.1" fill="#4fc49c"/><rect x="41.2" y="34.8" width="6" height="3" rx="1" fill="#4fc49c"/><rect x="42.2" y="32.3" width="4" height="1.6" fill="#3a3346" opacity="0.7"/><circle cx="57.0" cy="32.8" r="4" fill="#6a6e86"/><circle cx="57.0" cy="33.3" r="3.1" fill="#e87aa8"/><rect x="54.0" y="34.8" width="6" height="3" rx="1" fill="#e87aa8"/><rect x="55.0" y="32.3" width="4" height="1.6" fill="#3a3346" opacity="0.7"/><circle cx="69.8" cy="32.8" r="4" fill="#6a6e86"/><circle cx="69.8" cy="33.3" r="3.1" fill="#e87aa8"/><rect x="66.8" y="34.8" width="6" height="3" rx="1" fill="#e87aa8"/><rect x="67.8" y="32.3" width="4" height="1.6" fill="#3a3346" opacity="0.7"/><circle cx="82.6" cy="32.8" r="4" fill="#6a6e86"/><circle cx="82.6" cy="33.3" r="3.1" fill="#e87aa8"/><rect x="79.6" y="34.8" width="6" height="3" rx="1" fill="#e87aa8"/><rect x="80.6" y="32.3" width="4" height="1.6" fill="#3a3346" opacity="0.7"/><circle cx="5.8" cy="45.6" r="4" fill="#6a6e86"/><circle cx="5.8" cy="46.1" r="3.1" fill="#e87aa8"/><rect x="2.8" y="47.6" width="6" height="3" rx="1" fill="#e87aa8"/><rect x="3.8" y="45.1" width="4" height="1.6" fill="#3a3346" opacity="0.7"/><circle cx="18.6" cy="45.6" r="4" fill="#6a6e86"/><circle cx="18.6" cy="46.1" r="3.1" fill="#e87aa8"/><rect x="15.6" y="47.6" width="6" height="3" rx="1" fill="#e87aa8"/><rect x="16.6" y="45.1" width="4" height="1.6" fill="#3a3346" opacity="0.7"/><circle cx="31.4" cy="45.6" r="4" fill="#6a6e86"/><circle cx="31.4" cy="46.1" r="3.1" fill="#e87aa8"/><rect x="28.4" y="47.6" width="6" height="3" rx="1" fill="#e87aa8"/><rect x="29.4" y="45.1" width="4" height="1.6" fill="#3a3346" opacity="0.7"/><circle cx="44.2" cy="45.6" r="4" fill="#6a6e86"/><circle cx="44.2" cy="46.1" r="3.1" fill="#e87aa8"/><rect x="41.2" y="47.6" width="6" height="3" rx="1" fill="#e87aa8"/><rect x="42.2" y="45.1" width="4" height="1.6" fill="#3a3346" opacity="0.7"/><circle cx="57.0" cy="45.6" r="4" fill="#6a6e86"/><circle cx="57.0" cy="46.1" r="3.1" fill="#e87aa8"/><rect x="54.0" y="47.6" width="6" height="3" rx="1" fill="#e87aa8"/><rect x="55.0" y="45.1" width="4" height="1.6" fill="#3a3346" opacity="0.7"/><circle cx="69.8" cy="45.6" r="4" fill="#6a6e86"/><circle cx="69.8" cy="46.1" r="3.1" fill="#e87aa8"/><rect x="66.8" y="47.6" width="6" height="3" rx="1" fill="#e87aa8"/><rect x="67.8" y="45.1" width="4" height="1.6" fill="#3a3346" opacity="0.7"/><circle cx="82.6" cy="45.6" r="4" fill="#6a6e86"/><circle cx="82.6" cy="46.1" r="3.1" fill="#b2a8e6"/><rect x="79.6" y="47.6" width="6" height="3" rx="1" fill="#b2a8e6"/><rect x="80.6" y="45.1" width="4" height="1.6" fill="#3a3346" opacity="0.7"/><circle cx="5.8" cy="58.4" r="4" fill="#6a6e86"/><circle cx="5.8" cy="58.9" r="3.1" fill="#b2a8e6"/><rect x="2.8" y="60.4" width="6" height="3" rx="1" fill="#b2a8e6"/><rect x="3.8" y="57.9" width="4" height="1.6" fill="#3a3346" opacity="0.7"/><circle cx="18.6" cy="58.4" r="4" fill="#6a6e86"/><circle cx="18.6" cy="58.9" r="3.1" fill="#b2a8e6"/><rect x="15.6" y="60.4" width="6" height="3" rx="1" fill="#b2a8e6"/><rect x="16.6" y="57.9" width="4" height="1.6" fill="#3a3346" opacity="0.7"/><circle cx="31.4" cy="58.4" r="4" fill="#6a6e86"/><circle cx="31.4" cy="58.9" r="3.1" fill="#b2a8e6"/><rect x="28.4" y="60.4" width="6" height="3" rx="1" fill="#b2a8e6"/><rect x="29.4" y="57.9" width="4" height="1.6" fill="#3a3346" opacity="0.7"/><circle cx="44.2" cy="58.4" r="4" fill="#6a6e86"/><circle cx="44.2" cy="58.9" r="3.1" fill="#b2a8e6"/><rect x="41.2" y="60.4" width="6" height="3" rx="1" fill="#b2a8e6"/><rect x="42.2" y="57.9" width="4" height="1.6" fill="#3a3346" opacity="0.7"/><circle cx="57.0" cy="58.4" r="4" fill="#6a6e86"/><circle cx="57.0" cy="58.9" r="3.1" fill="#b2a8e6"/><rect x="54.0" y="60.4" width="6" height="3" rx="1" fill="#b2a8e6"/><rect x="55.0" y="57.9" width="4" height="1.6" fill="#3a3346" opacity="0.7"/><circle cx="69.8" cy="58.4" r="4" fill="#6a6e86"/><circle cx="69.8" cy="58.9" r="3.1" fill="#b2a8e6"/><rect x="66.8" y="60.4" width="6" height="3" rx="1" fill="#b2a8e6"/><rect x="67.8" y="57.9" width="4" height="1.6" fill="#3a3346" opacity="0.7"/><circle cx="82.6" cy="58.4" r="4" fill="#6a6e86"/><circle cx="82.6" cy="58.9" r="3.1" fill="#b2a8e6"/><rect x="79.6" y="60.4" width="6" height="3" rx="1" fill="#b2a8e6"/><rect x="80.6" y="57.9" width="4" height="1.6" fill="#3a3346" opacity="0.7"/><circle cx="5.8" cy="71.2" r="4" fill="#6a6e86"/><circle cx="5.8" cy="71.7" r="3.1" fill="#b2a8e6"/><rect x="2.8" y="73.2" width="6" height="3" rx="1" fill="#b2a8e6"/><rect x="3.8" y="70.7" width="4" height="1.6" fill="#3a3346" opacity="0.7"/><circle cx="18.6" cy="71.2" r="4" fill="#6a6e86"/><circle cx="18.6" cy="71.7" r="3.1" fill="#f0b632"/><rect x="15.6" y="73.2" width="6" height="3" rx="1" fill="#f0b632"/><rect x="16.6" y="70.7" width="4" height="1.6" fill="#3a3346" opacity="0.7"/><circle cx="31.4" cy="71.2" r="4" fill="#6a6e86"/><circle cx="31.4" cy="71.7" r="3.1" fill="#f0b632"/><rect x="28.4" y="73.2" width="6" height="3" rx="1" fill="#f0b632"/><rect x="29.4" y="70.7" width="4" height="1.6" fill="#3a3346" opacity="0.7"/><circle cx="44.2" cy="71.2" r="4" fill="#6a6e86"/><circle cx="44.2" cy="71.7" r="3.1" fill="#f0b632"/><rect x="41.2" y="73.2" width="6" height="3" rx="1" fill="#f0b632"/><rect x="42.2" y="70.7" width="4" height="1.6" fill="#3a3346" opacity="0.7"/><circle cx="57.0" cy="71.2" r="4" fill="#6a6e86"/><circle cx="57.0" cy="71.7" r="3.1" fill="#f0b632"/><rect x="54.0" y="73.2" width="6" height="3" rx="1" fill="#f0b632"/><rect x="55.0" y="70.7" width="4" height="1.6" fill="#3a3346" opacity="0.7"/><circle cx="69.8" cy="71.2" r="4" fill="#6a6e86"/><circle cx="69.8" cy="71.7" r="3.1" fill="#f0b632"/><rect x="66.8" y="73.2" width="6" height="3" rx="1" fill="#f0b632"/><rect x="67.8" y="70.7" width="4" height="1.6" fill="#3a3346" opacity="0.7"/><circle cx="82.6" cy="71.2" r="4" fill="#6a6e86"/><circle cx="82.6" cy="71.7" r="3.1" fill="#f0b632"/><rect x="79.6" y="73.2" width="6" height="3" rx="1" fill="#f0b632"/><rect x="80.6" y="70.7" width="4" height="1.6" fill="#3a3346" opacity="0.7"/><circle cx="5.8" cy="84.0" r="4" fill="#6a6e86"/><circle cx="5.8" cy="84.5" r="3.1" fill="#f0b632"/><rect x="2.8" y="86.0" width="6" height="3" rx="1" fill="#f0b632"/><rect x="3.8" y="83.5" width="4" height="1.6" fill="#3a3346" opacity="0.7"/><circle cx="18.6" cy="84.0" r="4" fill="#6a6e86"/><circle cx="18.6" cy="84.5" r="3.1" fill="#f0b632"/><rect x="15.6" y="86.0" width="6" height="3" rx="1" fill="#f0b632"/><rect x="16.6" y="83.5" width="4" height="1.6" fill="#3a3346" opacity="0.7"/><circle cx="31.4" cy="84.0" r="4" fill="#6a6e86"/><circle cx="31.4" cy="84.5" r="3.1" fill="#f0b632"/><rect x="28.4" y="86.0" width="6" height="3" rx="1" fill="#f0b632"/><rect x="29.4" y="83.5" width="4" height="1.6" fill="#3a3346" opacity="0.7"/></svg><div style="position:absolute;left:8px;top:97px;font-size:9px;color:#d3d6e0;white-space:nowrap">spriteshee...</div><div style="position:absolute;right:8px;top:97px;font-size:9px;color:#d3d6e0">drag</div><div style="position:absolute;left:8px;top:112px;width:56px;height:16px;border-radius:8px;border:1px solid #2a3147;font-size:8.6px;color:#d0d3de;line-height:14px;text-align:center;background:#111729">spritesheet</div></div><div style="position:absolute;left:105.5px;top:7px;width:91px;height:135px;border-radius:11px;border:1px solid #242b40;background:#131a2d;overflow:hidden"><div style="position:absolute;left:0;top:0;width:91px;height:90px;background:#1a2034"></div><svg width="91" height="90" style="position:absolute;left:0;top:0"><g transform="translate(2,1)"><polygon points="2,70 84,70 74,92 12,92" fill="#2a1208"/><polygon points="6,70 80,70 71,90 15,90" fill="#d9773a"/><polygon points="12,70 74,70 67,90 19,90" fill="#5a2a12"/><line x1="13" y1="77" x2="73" y2="77" stroke="#a85a28" stroke-width="2"/><line x1="15" y1="84" x2="71" y2="84" stroke="#a85a28" stroke-width="2"/><rect x="0" y="0" width="86" height="71" fill="#2a1208"/><rect x="2" y="2" width="82" height="67" fill="#e6823f"/><rect x="8" y="8" width="70" height="55" fill="#4a220e"/><rect x="9" y="9" width="68" height="16" fill="#b8622c"/><rect x="12" y="11" width="62" height="6" fill="#d27a3a" opacity="0.8"/><rect x="9" y="27" width="68" height="17" fill="#c2682d"/><rect x="9" y="46" width="68" height="16" fill="#c2682d"/><line x1="1" y1="1" x2="8" y2="8" stroke="#2a1208" stroke-width="1.3"/><line x1="85" y1="1" x2="78" y2="8" stroke="#2a1208" stroke-width="1.3"/><line x1="1" y1="70" x2="8" y2="63" stroke="#2a1208" stroke-width="1.3"/><line x1="85" y1="70" x2="78" y2="63" stroke="#2a1208" stroke-width="1.3"/></g></svg><div style="position:absolute;left:8px;top:97px;font-size:9px;color:#d3d6e0;white-space:nowrap">Box.png</div><div style="position:absolute;right:8px;top:97px;font-size:9px;color:#d3d6e0">drag</div><div style="position:absolute;left:8px;top:112px;width:56px;height:16px;border-radius:8px;border:1px solid #2a3147;font-size:8.6px;color:#d0d3de;line-height:14px;text-align:center;background:#111729">spritesheet</div></div><div style="position:absolute;left:203px;top:7px;width:91px;height:135px;border-radius:11px;border:1px solid #242b40;background:#131a2d;overflow:hidden"><svg width="91" height="90" style="position:absolute;left:0;top:0"><path d="M0 90 L0 10 Q0 0 10 0 L81 0 Q91 0 91 10 L91 90 Z" fill="#d49868"/><rect x="2" y="2" width="87" height="88" rx="8" fill="#7e4c30"/><rect x="5" y="5" width="81" height="6" fill="#8a5636"/><rect x="9" y="11" width="73" height="67" fill="#c08a60"/><rect x="10" y="12" width="71" height="65" fill="#3a181e"/><rect x="2" y="84" width="87" height="6" fill="#d49868" opacity="0.6"/><path d="M3 3 L10 11 M88 3 L81 11 M3 88 L10 78 M88 88 L81 78" stroke="#5a3020" stroke-width="1.5"/></svg><div style="position:absolute;left:8px;top:97px;font-size:9px;color:#d3d6e0;white-space:nowrap">1.png</div><div style="position:absolute;right:8px;top:97px;font-size:9px;color:#d3d6e0">drag</div></div><div style="position:absolute;left:8.5px;top:149px;width:91px;height:135px;border-radius:11px;border:1px solid #242b40;background:#131a2d;overflow:hidden"><svg width="91" height="91" style="position:absolute;left:0;top:0"><rect width="91" height="91" fill="#1c2030"/><rect x="0" y="0" width="91" height="6" fill="#d8783a"/><rect x="1.0" y="0.5" width="6" height="5" fill="#40b070"/><rect x="9.2" y="0.5" width="6" height="5" fill="#f0b040"/><rect x="17.4" y="0.5" width="6" height="5" fill="#d04040"/><rect x="25.6" y="0.5" width="6" height="5" fill="#e07a3a"/><rect x="33.8" y="0.5" width="6" height="5" fill="#e07a3a"/><rect x="42.0" y="0.5" width="6" height="5" fill="#e6e6ec"/><rect x="50.2" y="0.5" width="6" height="5" fill="#e07a3a"/><rect x="58.4" y="0.5" width="6" height="5" fill="#40b070"/><rect x="66.6" y="0.5" width="6" height="5" fill="#e6e6ec"/><rect x="74.8" y="0.5" width="6" height="5" fill="#e07a3a"/><rect x="83.0" y="0.5" width="6" height="5" fill="#e6e6ec"/><rect x="1.0" y="8.0" width="4.2" height="4.2" rx="1" fill="#f0b040"/><rect x="7.0" y="8.0" width="4.2" height="4.2" rx="1" fill="#f0b040"/><rect x="13.0" y="8.0" width="4.2" height="4.2" rx="1" fill="#f09060"/><rect x="19.0" y="8.0" width="4.2" height="4.2" rx="1" fill="#e8e8ee"/><rect x="25.0" y="8.0" width="4.2" height="4.2" rx="1" fill="#d04040"/><rect x="31.0" y="8.0" width="4.2" height="4.2" rx="1" fill="#e8e8ee"/><rect x="43.0" y="8.0" width="4.2" height="4.2" rx="1" fill="#4a90d0"/><rect x="49.0" y="8.0" width="4.2" height="4.2" rx="1" fill="#d04040"/><rect x="55.0" y="8.0" width="4.2" height="4.2" rx="1" fill="#40b070"/><rect x="61.0" y="8.0" width="4.2" height="4.2" rx="1" fill="#40b070"/><rect x="67.0" y="8.0" width="4.2" height="4.2" rx="1" fill="#e8e8ee"/><rect x="73.0" y="8.0" width="4.2" height="4.2" rx="1" fill="#c8c8d0"/><rect x="79.0" y="8.0" width="4.2" height="4.2" rx="1" fill="#e8e8ee"/><rect x="85.0" y="8.0" width="4.2" height="4.2" rx="1" fill="#d04040"/><rect x="1.0" y="14.0" width="4.2" height="4.2" rx="1" fill="#f09060"/><rect x="13.0" y="14.0" width="4.2" height="4.2" rx="1" fill="#e8e8ee"/><rect x="19.0" y="14.0" width="4.2" height="4.2" rx="1" fill="#c8c8d0"/><rect x="25.0" y="14.0" width="4.2" height="4.2" rx="1" fill="#9a70c8"/><rect x="31.0" y="14.0" width="4.2" height="4.2" rx="1" fill="#c0c0c8"/><rect x="37.0" y="14.0" width="4.2" height="4.2" rx="1" fill="#d04040"/><rect x="49.0" y="14.0" width="4.2" height="4.2" rx="1" fill="#d04040"/><rect x="55.0" y="14.0" width="4.2" height="4.2" rx="1" fill="#e8e8ee"/><rect x="61.0" y="14.0" width="4.2" height="4.2" rx="1" fill="#9a70c8"/><rect x="73.0" y="14.0" width="4.2" height="4.2" rx="1" fill="#f0b040"/><rect x="79.0" y="14.0" width="4.2" height="4.2" rx="1" fill="#4a90d0"/><rect x="85.0" y="14.0" width="4.2" height="4.2" rx="1" fill="#9a70c8"/><rect x="1.0" y="20.0" width="4.2" height="4.2" rx="1" fill="#c0c0c8"/><rect x="7.0" y="20.0" width="4.2" height="4.2" rx="1" fill="#c8c8d0"/><rect x="13.0" y="20.0" width="4.2" height="4.2" rx="1" fill="#f09060"/><rect x="19.0" y="20.0" width="4.2" height="4.2" rx="1" fill="#9a70c8"/><rect x="25.0" y="20.0" width="4.2" height="4.2" rx="1" fill="#9a70c8"/><rect x="31.0" y="20.0" width="4.2" height="4.2" rx="1" fill="#e8e8ee"/><rect x="43.0" y="20.0" width="4.2" height="4.2" rx="1" fill="#f0b040"/><rect x="55.0" y="20.0" width="4.2" height="4.2" rx="1" fill="#c8c8d0"/><rect x="61.0" y="20.0" width="4.2" height="4.2" rx="1" fill="#e8e8ee"/><rect x="67.0" y="20.0" width="4.2" height="4.2" rx="1" fill="#c8c8d0"/><rect x="79.0" y="20.0" width="4.2" height="4.2" rx="1" fill="#4a90d0"/><rect x="1.0" y="26.0" width="4.2" height="4.2" rx="1" fill="#c0c0c8"/><rect x="7.0" y="26.0" width="4.2" height="4.2" rx="1" fill="#e8e8ee"/><rect x="13.0" y="26.0" width="4.2" height="4.2" rx="1" fill="#e07a3a"/><rect x="19.0" y="26.0" width="4.2" height="4.2" rx="1" fill="#e8e8ee"/><rect x="25.0" y="26.0" width="4.2" height="4.2" rx="1" fill="#d04040"/><rect x="31.0" y="26.0" width="4.2" height="4.2" rx="1" fill="#c0c0c8"/><rect x="37.0" y="26.0" width="4.2" height="4.2" rx="1" fill="#c0c0c8"/><rect x="43.0" y="26.0" width="4.2" height="4.2" rx="1" fill="#e8e8ee"/><rect x="67.0" y="26.0" width="4.2" height="4.2" rx="1" fill="#4a90d0"/><rect x="79.0" y="26.0" width="4.2" height="4.2" rx="1" fill="#4a90d0"/><rect x="1.0" y="32.0" width="4.2" height="4.2" rx="1" fill="#40b070"/><rect x="7.0" y="32.0" width="4.2" height="4.2" rx="1" fill="#c8c8d0"/><rect x="13.0" y="32.0" width="4.2" height="4.2" rx="1" fill="#c0c0c8"/><rect x="25.0" y="32.0" width="4.2" height="4.2" rx="1" fill="#e8e8ee"/><rect x="31.0" y="32.0" width="4.2" height="4.2" rx="1" fill="#4a90d0"/><rect x="37.0" y="32.0" width="4.2" height="4.2" rx="1" fill="#e8e8ee"/><rect x="43.0" y="32.0" width="4.2" height="4.2" rx="1" fill="#40b070"/><rect x="49.0" y="32.0" width="4.2" height="4.2" rx="1" fill="#f09060"/><rect x="61.0" y="32.0" width="4.2" height="4.2" rx="1" fill="#e07a3a"/><rect x="67.0" y="32.0" width="4.2" height="4.2" rx="1" fill="#c8c8d0"/><rect x="79.0" y="32.0" width="4.2" height="4.2" rx="1" fill="#4a90d0"/><rect x="85.0" y="32.0" width="4.2" height="4.2" rx="1" fill="#c0c0c8"/><rect x="1.0" y="38.0" width="4.2" height="4.2" rx="1" fill="#e07a3a"/><rect x="7.0" y="38.0" width="4.2" height="4.2" rx="1" fill="#d04040"/><rect x="13.0" y="38.0" width="4.2" height="4.2" rx="1" fill="#f0b040"/><rect x="19.0" y="38.0" width="4.2" height="4.2" rx="1" fill="#e07a3a"/><rect x="25.0" y="38.0" width="4.2" height="4.2" rx="1" fill="#e8e8ee"/><rect x="31.0" y="38.0" width="4.2" height="4.2" rx="1" fill="#f0b040"/><rect x="43.0" y="38.0" width="4.2" height="4.2" rx="1" fill="#f0b040"/><rect x="55.0" y="38.0" width="4.2" height="4.2" rx="1" fill="#40b070"/><rect x="61.0" y="38.0" width="4.2" height="4.2" rx="1" fill="#9a70c8"/><rect x="67.0" y="38.0" width="4.2" height="4.2" rx="1" fill="#c0c0c8"/><rect x="73.0" y="38.0" width="4.2" height="4.2" rx="1" fill="#c0c0c8"/><rect x="85.0" y="38.0" width="4.2" height="4.2" rx="1" fill="#c0c0c8"/><rect x="55" y="24" width="36" height="18" fill="#e07a3a" opacity="0.55"/><rect x="0.0" y="44.0" width="7" height="4.8" fill="#d4d4dc"/><rect x="7.6" y="44.0" width="7" height="4.8" fill="#d4d4dc"/><rect x="15.2" y="44.0" width="7" height="4.8" fill="#40a860"/><rect x="22.8" y="44.0" width="7" height="4.8" fill="#d4d4dc"/><rect x="30.4" y="44.0" width="7" height="4.8" fill="#b8b8c4"/><rect x="38.0" y="44.0" width="7" height="4.8" fill="#d4d4dc"/><rect x="45.6" y="44.0" width="7" height="4.8" fill="#d4d4dc"/><rect x="53.2" y="44.0" width="7" height="4.8" fill="#40a860"/><rect x="60.8" y="44.0" width="7" height="4.8" fill="#d4d4dc"/><rect x="68.4" y="44.0" width="7" height="4.8" fill="#d4d4dc"/><rect x="76.0" y="44.0" width="7" height="4.8" fill="#d4d4dc"/><rect x="83.6" y="44.0" width="7" height="4.8" fill="#d4d4dc"/><rect x="0.0" y="49.2" width="7" height="4.8" fill="#e07a3a"/><rect x="7.6" y="49.2" width="7" height="4.8" fill="#b8b8c4"/><rect x="15.2" y="49.2" width="7" height="4.8" fill="#d4d4dc"/><rect x="22.8" y="49.2" width="7" height="4.8" fill="#d4d4dc"/><rect x="30.4" y="49.2" width="7" height="4.8" fill="#d4d4dc"/><rect x="38.0" y="49.2" width="7" height="4.8" fill="#f09a60"/><rect x="45.6" y="49.2" width="7" height="4.8" fill="#d4d4dc"/><rect x="53.2" y="49.2" width="7" height="4.8" fill="#d4d4dc"/><rect x="60.8" y="49.2" width="7" height="4.8" fill="#b8b8c4"/><rect x="68.4" y="49.2" width="7" height="4.8" fill="#b8b8c4"/><rect x="76.0" y="49.2" width="7" height="4.8" fill="#e07a3a"/><rect x="83.6" y="49.2" width="7" height="4.8" fill="#9a70c8"/><rect x="0.0" y="54.4" width="7" height="4.8" fill="#e07a3a"/><rect x="7.6" y="54.4" width="7" height="4.8" fill="#d4d4dc"/><rect x="15.2" y="54.4" width="7" height="4.8" fill="#d4d4dc"/><rect x="22.8" y="54.4" width="7" height="4.8" fill="#e07a3a"/><rect x="30.4" y="54.4" width="7" height="4.8" fill="#9a70c8"/><rect x="38.0" y="54.4" width="7" height="4.8" fill="#d4d4dc"/><rect x="45.6" y="54.4" width="7" height="4.8" fill="#b8b8c4"/><rect x="53.2" y="54.4" width="7" height="4.8" fill="#9a70c8"/><rect x="60.8" y="54.4" width="7" height="4.8" fill="#40a860"/><rect x="68.4" y="54.4" width="7" height="4.8" fill="#40a860"/><rect x="76.0" y="54.4" width="7" height="4.8" fill="#d4d4dc"/><rect x="83.6" y="54.4" width="7" height="4.8" fill="#d4d4dc"/><rect x="0.0" y="59.6" width="7" height="4.8" fill="#d4d4dc"/><rect x="7.6" y="59.6" width="7" height="4.8" fill="#d4d4dc"/><rect x="15.2" y="59.6" width="7" height="4.8" fill="#d4d4dc"/><rect x="22.8" y="59.6" width="7" height="4.8" fill="#f09a60"/><rect x="30.4" y="59.6" width="7" height="4.8" fill="#9a70c8"/><rect x="38.0" y="59.6" width="7" height="4.8" fill="#40a860"/><rect x="45.6" y="59.6" width="7" height="4.8" fill="#e07a3a"/><rect x="53.2" y="59.6" width="7" height="4.8" fill="#e07a3a"/><rect x="60.8" y="59.6" width="7" height="4.8" fill="#e07a3a"/><rect x="68.4" y="59.6" width="7" height="4.8" fill="#d4d4dc"/><rect x="76.0" y="59.6" width="7" height="4.8" fill="#d4d4dc"/><rect x="83.6" y="59.6" width="7" height="4.8" fill="#40a860"/><rect x="0.0" y="64.8" width="7" height="4.8" fill="#d4d4dc"/><rect x="7.6" y="64.8" width="7" height="4.8" fill="#9a70c8"/><rect x="15.2" y="64.8" width="7" height="4.8" fill="#d4d4dc"/><rect x="22.8" y="64.8" width="7" height="4.8" fill="#e07a3a"/><rect x="30.4" y="64.8" width="7" height="4.8" fill="#e07a3a"/><rect x="38.0" y="64.8" width="7" height="4.8" fill="#e07a3a"/><rect x="45.6" y="64.8" width="7" height="4.8" fill="#d4d4dc"/><rect x="53.2" y="64.8" width="7" height="4.8" fill="#e07a3a"/><rect x="60.8" y="64.8" width="7" height="4.8" fill="#b8b8c4"/><rect x="68.4" y="64.8" width="7" height="4.8" fill="#b8b8c4"/><rect x="76.0" y="64.8" width="7" height="4.8" fill="#d4d4dc"/><rect x="83.6" y="64.8" width="7" height="4.8" fill="#e07a3a"/><rect x="0.0" y="70.0" width="7" height="4.8" fill="#d4d4dc"/><rect x="7.6" y="70.0" width="7" height="4.8" fill="#d4d4dc"/><rect x="15.2" y="70.0" width="7" height="4.8" fill="#d4d4dc"/><rect x="22.8" y="70.0" width="7" height="4.8" fill="#e07a3a"/><rect x="30.4" y="70.0" width="7" height="4.8" fill="#d4d4dc"/><rect x="38.0" y="70.0" width="7" height="4.8" fill="#9a70c8"/><rect x="45.6" y="70.0" width="7" height="4.8" fill="#e07a3a"/><rect x="53.2" y="70.0" width="7" height="4.8" fill="#e07a3a"/><rect x="60.8" y="70.0" width="7" height="4.8" fill="#d4d4dc"/><rect x="68.4" y="70.0" width="7" height="4.8" fill="#d4d4dc"/><rect x="76.0" y="70.0" width="7" height="4.8" fill="#d4d4dc"/><rect x="83.6" y="70.0" width="7" height="4.8" fill="#40a860"/><rect x="0.0" y="75.2" width="7" height="4.8" fill="#d4d4dc"/><rect x="7.6" y="75.2" width="7" height="4.8" fill="#d4d4dc"/><rect x="15.2" y="75.2" width="7" height="4.8" fill="#d4d4dc"/><rect x="22.8" y="75.2" width="7" height="4.8" fill="#40a860"/><rect x="30.4" y="75.2" width="7" height="4.8" fill="#f09a60"/><rect x="38.0" y="75.2" width="7" height="4.8" fill="#f09a60"/><rect x="45.6" y="75.2" width="7" height="4.8" fill="#d4d4dc"/><rect x="53.2" y="75.2" width="7" height="4.8" fill="#f09a60"/><rect x="60.8" y="75.2" width="7" height="4.8" fill="#d4d4dc"/><rect x="68.4" y="75.2" width="7" height="4.8" fill="#d4d4dc"/><rect x="76.0" y="75.2" width="7" height="4.8" fill="#d4d4dc"/><rect x="83.6" y="75.2" width="7" height="4.8" fill="#e07a3a"/><rect x="0.0" y="80.4" width="7" height="4.8" fill="#b8b8c4"/><rect x="7.6" y="80.4" width="7" height="4.8" fill="#e07a3a"/><rect x="15.2" y="80.4" width="7" height="4.8" fill="#d4d4dc"/><rect x="22.8" y="80.4" width="7" height="4.8" fill="#d4d4dc"/><rect x="30.4" y="80.4" width="7" height="4.8" fill="#f09a60"/><rect x="38.0" y="80.4" width="7" height="4.8" fill="#d4d4dc"/><rect x="45.6" y="80.4" width="7" height="4.8" fill="#b8b8c4"/><rect x="53.2" y="80.4" width="7" height="4.8" fill="#d4d4dc"/><rect x="60.8" y="80.4" width="7" height="4.8" fill="#d4d4dc"/><rect x="68.4" y="80.4" width="7" height="4.8" fill="#f09a60"/><rect x="76.0" y="80.4" width="7" height="4.8" fill="#d4d4dc"/><rect x="83.6" y="80.4" width="7" height="4.8" fill="#d4d4dc"/><polygon points="0,48 91,56 91,59 0,51" fill="#e07a3a" opacity="0.85"/><polygon points="0,60 91,70 91,73 0,63" fill="#9a70c8" opacity="0.85"/><polygon points="0,66 91,74 91,77 0,69" fill="#e07a3a" opacity="0.85"/><polygon points="0,52 91,57 91,60 0,55" fill="#40a860" opacity="0.85"/><rect x="0" y="85" width="91" height="6" fill="#1c2030"/><rect x="14" y="86" width="16" height="4" fill="#4aa0e0"/><circle cx="5" cy="88" r="1.8" fill="#f0b040"/><circle cx="10" cy="88" r="1.8" fill="#f0b040"/></svg><div style="position:absolute;left:8px;top:97px;font-size:9px;color:#d3d6e0;white-space:nowrap">spriteshee...</div><div style="position:absolute;right:8px;top:97px;font-size:9px;color:#d3d6e0">drag</div><div style="position:absolute;left:8px;top:112px;width:56px;height:16px;border-radius:8px;border:1px solid #2a3147;font-size:8.6px;color:#d0d3de;line-height:14px;text-align:center;background:#111729">spritesheet</div></div><div style="position:absolute;left:105.5px;top:149px;width:91px;height:135px;border-radius:11px;border:1px solid #242b40;background:#131a2d;overflow:hidden"><div style="position:absolute;left:0;top:0;width:89px;height:90px;border-radius:9px;background:linear-gradient(180deg,#dcdde5,#c6c8d4)"></div><div style="position:absolute;left:0;top:13.5px;width:89px;text-align:center;font-size:9.5px;font-weight:700;letter-spacing:3px;color:#1a1a24;padding-left:1px">AUDIO</div><div style="position:absolute;left:0;top:54px;width:89px;text-align:center;font-size:8px;letter-spacing:0.9px;color:#8a8c9a;line-height:12px">PIXEL-<br>DEATH-66829.</div><div style="position:absolute;left:8px;top:97px;font-size:9px;color:#d3d6e0;white-space:nowrap">pixel-deat...</div><div style="position:absolute;right:8px;top:97px;font-size:9px;color:#d3d6e0">drag</div><div style="position:absolute;left:8px;top:112px;width:35px;height:16px;border-radius:8px;border:1px solid #2a3147;font-size:8.6px;color:#d0d3de;line-height:14px;text-align:center;background:#111729">audio</div></div><div style="position:absolute;left:203px;top:149px;width:91px;height:135px;border-radius:11px;border:1px solid #242b40;background:#131a2d;overflow:hidden"><div style="position:absolute;left:0;top:0;width:91px;height:90px;background:#1b2338"></div><svg width="91" height="90" style="position:absolute;left:0;top:0"><path d="M36 14 C40 6 58 6 62 14 C68 24 70 40 74 52 C78 62 76 70 72 76 L60 72 L56 40 L40 44 C36 36 33 24 36 14 Z" fill="#1c1418"/><path d="M62 36 C70 44 76 52 76 66 L70 66 C70 56 66 48 60 42 Z" fill="#c02a78"/><path d="M37 30 C36 38 36 44 36 48 L40 48 C40 42 40 36 41 30 Z" fill="#b82a70"/><polygon points="31,9 35,15 39,11" fill="#d03080"/><polygon points="50,7 53,3 56,10" fill="#d03080"/><ellipse cx="48" cy="29" rx="8" ry="9" fill="#ecc4b4"/><path d="M39 22 C42 14 54 14 58 22 L56 26 C52 20 44 22 40 27 Z" fill="#1c1418"/><path d="M40 40 C44 38 52 38 56 41 L56 50 L38 50 Z" fill="#e6bcae"/><path d="M34 48 C40 44 54 44 58 48 L57 65 L36 65 Z" fill="#151216"/><path d="M56 38 C66 40 72 50 70 66 L68 88 L56 88 L54 48 Z" fill="#231b26"/><path d="M58 44 L66 46 L62 60 Z" fill="#c02a78" opacity="0.7"/><path d="M62 66 L68 68 L64 80 Z" fill="#a82268" opacity="0.7"/><rect x="38" y="65" width="18" height="7" fill="#e6bcae"/><path d="M37 72 L58 72 L58 80 L38 80 Z" fill="#141216"/><path d="M16 54 C18 46 30 44 38 50 L36 62 L30 82 L22 84 C18 74 16 62 16 54 Z" fill="#161318"/><path d="M18 52 C24 46 32 46 38 52 L32 56 C28 52 22 52 20 56 Z" fill="#2a1c28"/><circle cx="28" cy="56" r="3" fill="#e6bcae"/><path d="M30 72 C34 70 52 74 58 80 L58 90 L30 90 Z" fill="#ecc4b4"/><path d="M22 82 C26 78 38 80 42 84 L42 90 L20 90 Z" fill="#1a161c"/><path d="M70 86 L78 86 L76 90 L68 90 Z" fill="#e6bcae"/></svg><div style="position:absolute;left:8px;top:97px;font-size:9px;color:#d3d6e0;white-space:nowrap">c1.png</div><div style="position:absolute;right:8px;top:97px;font-size:9px;color:#d3d6e0">drag</div></div><div style="position:absolute;left:8.5px;top:291px;width:91px;height:135px;border-radius:11px;border:1px solid #242b40;background:#131a2d;overflow:hidden"><div style="position:absolute;left:0;top:0;width:91px;height:90px;background:#1a2138"></div><svg width="91" height="50" style="position:absolute;left:0;top:0"><path d="M40 30 L84 6 L88 12 L86 16 L48 38 Z" fill="#7a6240"/><path d="M52 22 L56 14 L60 20 L64 10 L68 17 L72 7 L75 14 L80 4 L82 12 L88 8 L84 18 Z" fill="#9a8258"/><path d="M48 12 L56 10 L58 18 L50 20 Z" fill="#3a3028"/><ellipse cx="51" cy="24" rx="6" ry="7" fill="#8a8a3a"/><path d="M30 38 C34 30 60 28 74 34 L80 44 L22 44 Z" fill="#7a6a30"/><path d="M56 30 C64 28 76 32 80 40 L82 44 L58 44 Z" fill="#a08a5a"/><path d="M4 44 L28 34 L36 40 L10 46 Z" fill="#6a5a30"/><circle cx="34" cy="34" r="5" fill="#b09a48"/><circle cx="40" cy="33" r="3.5" fill="#c0aa50"/><path d="M44 40 L50 34 L56 44 Z" fill="#5a4a6a"/></svg></div><div style="position:absolute;left:105.5px;top:291px;width:91px;height:135px;border-radius:11px;border:1px solid #242b40;background:#131a2d;overflow:hidden"><div style="position:absolute;left:0;top:0;width:91px;height:90px;background:#1c2438"></div><svg width="91" height="50" style="position:absolute;left:0;top:0"><circle cx="33" cy="15" r="3.8" fill="#5ec6f4"/><circle cx="25" cy="20" r="2.6" fill="#5ec6f4"/><circle cx="30" cy="24" r="1.5" fill="#5ec6f4"/><ellipse cx="46" cy="56" rx="31" ry="36" fill="#3aa6ee"/><ellipse cx="42" cy="38" rx="18" ry="12" fill="#6fd0ff" opacity="0.6"/><circle cx="54" cy="28" r="4" fill="#d8f2ff" opacity="0.6"/><ellipse cx="36" cy="43" rx="4" ry="2.5" fill="#10104a"/><ellipse cx="58" cy="43" rx="4" ry="2.5" fill="#10104a"/></svg></div><div style="position:absolute;left:203px;top:291px;width:91px;height:135px;border-radius:11px;border:1px solid #242b40;background:#131a2d;overflow:hidden"><div style="position:absolute;left:0;top:0;width:91px;height:90px;background:#1b2137"></div><svg width="91" height="90" style="position:absolute;left:0;top:0"><circle cx="6.2" cy="7.4" r="4" fill="#6a6e86"/><circle cx="6.2" cy="7.9" r="3.1" fill="#d9c3b2"/><rect x="3.2" y="9.4" width="6" height="3" rx="1" fill="#d9c3b2"/><rect x="4.2" y="6.9" width="4" height="1.6" fill="#3a3346" opacity="0.7"/><circle cx="18.9" cy="7.4" r="4" fill="#6a6e86"/><circle cx="18.9" cy="7.9" r="3.1" fill="#d9c3b2"/><rect x="15.9" y="9.4" width="6" height="3" rx="1" fill="#d9c3b2"/><rect x="16.9" y="6.9" width="4" height="1.6" fill="#3a3346" opacity="0.7"/><circle cx="31.6" cy="7.4" r="4" fill="#6a6e86"/><circle cx="31.6" cy="7.9" r="3.1" fill="#d9c3b2"/><rect x="28.6" y="9.4" width="6" height="3" rx="1" fill="#d9c3b2"/><rect x="29.6" y="6.9" width="4" height="1.6" fill="#3a3346" opacity="0.7"/><circle cx="44.3" cy="7.4" r="4" fill="#6a6e86"/><circle cx="44.3" cy="7.9" r="3.1" fill="#d9c3b2"/><rect x="41.3" y="9.4" width="6" height="3" rx="1" fill="#d9c3b2"/><rect x="42.3" y="6.9" width="4" height="1.6" fill="#3a3346" opacity="0.7"/><circle cx="57.0" cy="7.4" r="4" fill="#6a6e86"/><circle cx="57.0" cy="7.9" r="3.1" fill="#d9c3b2"/><rect x="54.0" y="9.4" width="6" height="3" rx="1" fill="#d9c3b2"/><rect x="55.0" y="6.9" width="4" height="1.6" fill="#3a3346" opacity="0.7"/><circle cx="69.7" cy="7.4" r="4" fill="#6a6e86"/><circle cx="69.7" cy="7.9" r="3.1" fill="#d9c3b2"/><rect x="66.7" y="9.4" width="6" height="3" rx="1" fill="#d9c3b2"/><rect x="67.7" y="6.9" width="4" height="1.6" fill="#3a3346" opacity="0.7"/><circle cx="82.4" cy="7.4" r="4" fill="#6a6e86"/><circle cx="82.4" cy="7.9" r="3.1" fill="#d9c3b2"/><rect x="79.4" y="9.4" width="6" height="3" rx="1" fill="#d9c3b2"/><rect x="80.4" y="6.9" width="4" height="1.6" fill="#3a3346" opacity="0.7"/><circle cx="6.2" cy="20.1" r="4" fill="#6a6e86"/><circle cx="6.2" cy="20.6" r="3.1" fill="#d9c3b2"/><rect x="3.2" y="22.1" width="6" height="3" rx="1" fill="#d9c3b2"/><rect x="4.2" y="19.6" width="4" height="1.6" fill="#3a3346" opacity="0.7"/><circle cx="18.9" cy="20.1" r="4" fill="#6a6e86"/><circle cx="18.9" cy="20.6" r="3.1" fill="#d9c3b2"/><rect x="15.9" y="22.1" width="6" height="3" rx="1" fill="#d9c3b2"/><rect x="16.9" y="19.6" width="4" height="1.6" fill="#3a3346" opacity="0.7"/><circle cx="31.6" cy="20.1" r="4" fill="#6a6e86"/><circle cx="31.6" cy="20.6" r="3.1" fill="#4fc49c"/><rect x="28.6" y="22.1" width="6" height="3" rx="1" fill="#4fc49c"/><rect x="29.6" y="19.6" width="4" height="1.6" fill="#3a3346" opacity="0.7"/><circle cx="44.3" cy="20.1" r="4" fill="#6a6e86"/><circle cx="44.3" cy="20.6" r="3.1" fill="#4fc49c"/><rect x="41.3" y="22.1" width="6" height="3" rx="1" fill="#4fc49c"/><rect x="42.3" y="19.6" width="4" height="1.6" fill="#3a3346" opacity="0.7"/><circle cx="57.0" cy="20.1" r="4" fill="#6a6e86"/><circle cx="57.0" cy="20.6" r="3.1" fill="#4fc49c"/><rect x="54.0" y="22.1" width="6" height="3" rx="1" fill="#4fc49c"/><rect x="55.0" y="19.6" width="4" height="1.6" fill="#3a3346" opacity="0.7"/><circle cx="69.7" cy="20.1" r="4" fill="#6a6e86"/><circle cx="69.7" cy="20.6" r="3.1" fill="#4fc49c"/><rect x="66.7" y="22.1" width="6" height="3" rx="1" fill="#4fc49c"/><rect x="67.7" y="19.6" width="4" height="1.6" fill="#3a3346" opacity="0.7"/><circle cx="82.4" cy="20.1" r="4" fill="#6a6e86"/><circle cx="82.4" cy="20.6" r="3.1" fill="#4fc49c"/><rect x="79.4" y="22.1" width="6" height="3" rx="1" fill="#4fc49c"/><rect x="80.4" y="19.6" width="4" height="1.6" fill="#3a3346" opacity="0.7"/><circle cx="6.2" cy="32.8" r="4" fill="#6a6e86"/><circle cx="6.2" cy="33.3" r="3.1" fill="#4fc49c"/><rect x="3.2" y="34.8" width="6" height="3" rx="1" fill="#4fc49c"/><rect x="4.2" y="32.3" width="4" height="1.6" fill="#3a3346" opacity="0.7"/><circle cx="18.9" cy="32.8" r="4" fill="#6a6e86"/><circle cx="18.9" cy="33.3" r="3.1" fill="#4fc49c"/><rect x="15.9" y="34.8" width="6" height="3" rx="1" fill="#4fc49c"/><rect x="16.9" y="32.3" width="4" height="1.6" fill="#3a3346" opacity="0.7"/><circle cx="31.6" cy="32.8" r="4" fill="#6a6e86"/><circle cx="31.6" cy="33.3" r="3.1" fill="#4fc49c"/><rect x="28.6" y="34.8" width="6" height="3" rx="1" fill="#4fc49c"/><rect x="29.6" y="32.3" width="4" height="1.6" fill="#3a3346" opacity="0.7"/><circle cx="44.3" cy="32.8" r="4" fill="#6a6e86"/><circle cx="44.3" cy="33.3" r="3.1" fill="#4fc49c"/><rect x="41.3" y="34.8" width="6" height="3" rx="1" fill="#4fc49c"/><rect x="42.3" y="32.3" width="4" height="1.6" fill="#3a3346" opacity="0.7"/><circle cx="57.0" cy="32.8" r="4" fill="#6a6e86"/><circle cx="57.0" cy="33.3" r="3.1" fill="#e87aa8"/><rect x="54.0" y="34.8" width="6" height="3" rx="1" fill="#e87aa8"/><rect x="55.0" y="32.3" width="4" height="1.6" fill="#3a3346" opacity="0.7"/><circle cx="69.7" cy="32.8" r="4" fill="#6a6e86"/><circle cx="69.7" cy="33.3" r="3.1" fill="#e87aa8"/><rect x="66.7" y="34.8" width="6" height="3" rx="1" fill="#e87aa8"/><rect x="67.7" y="32.3" width="4" height="1.6" fill="#3a3346" opacity="0.7"/><circle cx="82.4" cy="32.8" r="4" fill="#6a6e86"/><circle cx="82.4" cy="33.3" r="3.1" fill="#e87aa8"/><rect x="79.4" y="34.8" width="6" height="3" rx="1" fill="#e87aa8"/><rect x="80.4" y="32.3" width="4" height="1.6" fill="#3a3346" opacity="0.7"/><circle cx="6.2" cy="45.5" r="4" fill="#6a6e86"/><circle cx="6.2" cy="46.0" r="3.1" fill="#e87aa8"/><rect x="3.2" y="47.5" width="6" height="3" rx="1" fill="#e87aa8"/><rect x="4.2" y="45.0" width="4" height="1.6" fill="#3a3346" opacity="0.7"/><circle cx="18.9" cy="45.5" r="4" fill="#6a6e86"/><circle cx="18.9" cy="46.0" r="3.1" fill="#e87aa8"/><rect x="15.9" y="47.5" width="6" height="3" rx="1" fill="#e87aa8"/><rect x="16.9" y="45.0" width="4" height="1.6" fill="#3a3346" opacity="0.7"/><circle cx="31.6" cy="45.5" r="4" fill="#6a6e86"/><circle cx="31.6" cy="46.0" r="3.1" fill="#e87aa8"/><rect x="28.6" y="47.5" width="6" height="3" rx="1" fill="#e87aa8"/><rect x="29.6" y="45.0" width="4" height="1.6" fill="#3a3346" opacity="0.7"/><circle cx="44.3" cy="45.5" r="4" fill="#6a6e86"/><circle cx="44.3" cy="46.0" r="3.1" fill="#e87aa8"/><rect x="41.3" y="47.5" width="6" height="3" rx="1" fill="#e87aa8"/><rect x="42.3" y="45.0" width="4" height="1.6" fill="#3a3346" opacity="0.7"/><circle cx="57.0" cy="45.5" r="4" fill="#6a6e86"/><circle cx="57.0" cy="46.0" r="3.1" fill="#e87aa8"/><rect x="54.0" y="47.5" width="6" height="3" rx="1" fill="#e87aa8"/><rect x="55.0" y="45.0" width="4" height="1.6" fill="#3a3346" opacity="0.7"/><circle cx="69.7" cy="45.5" r="4" fill="#6a6e86"/><circle cx="69.7" cy="46.0" r="3.1" fill="#e87aa8"/><rect x="66.7" y="47.5" width="6" height="3" rx="1" fill="#e87aa8"/><rect x="67.7" y="45.0" width="4" height="1.6" fill="#3a3346" opacity="0.7"/><circle cx="82.4" cy="45.5" r="4" fill="#6a6e86"/><circle cx="82.4" cy="46.0" r="3.1" fill="#b2a8e6"/><rect x="79.4" y="47.5" width="6" height="3" rx="1" fill="#b2a8e6"/><rect x="80.4" y="45.0" width="4" height="1.6" fill="#3a3346" opacity="0.7"/></svg></div></div><div style="position:absolute;left:321px;top:297px;width:11px;height:327px;background:#262932"></div><div style="position:absolute;left:323.5px;top:298px;width:6px;height:183px;border-radius:3px;background:#7c7c82"></div></body></html>
